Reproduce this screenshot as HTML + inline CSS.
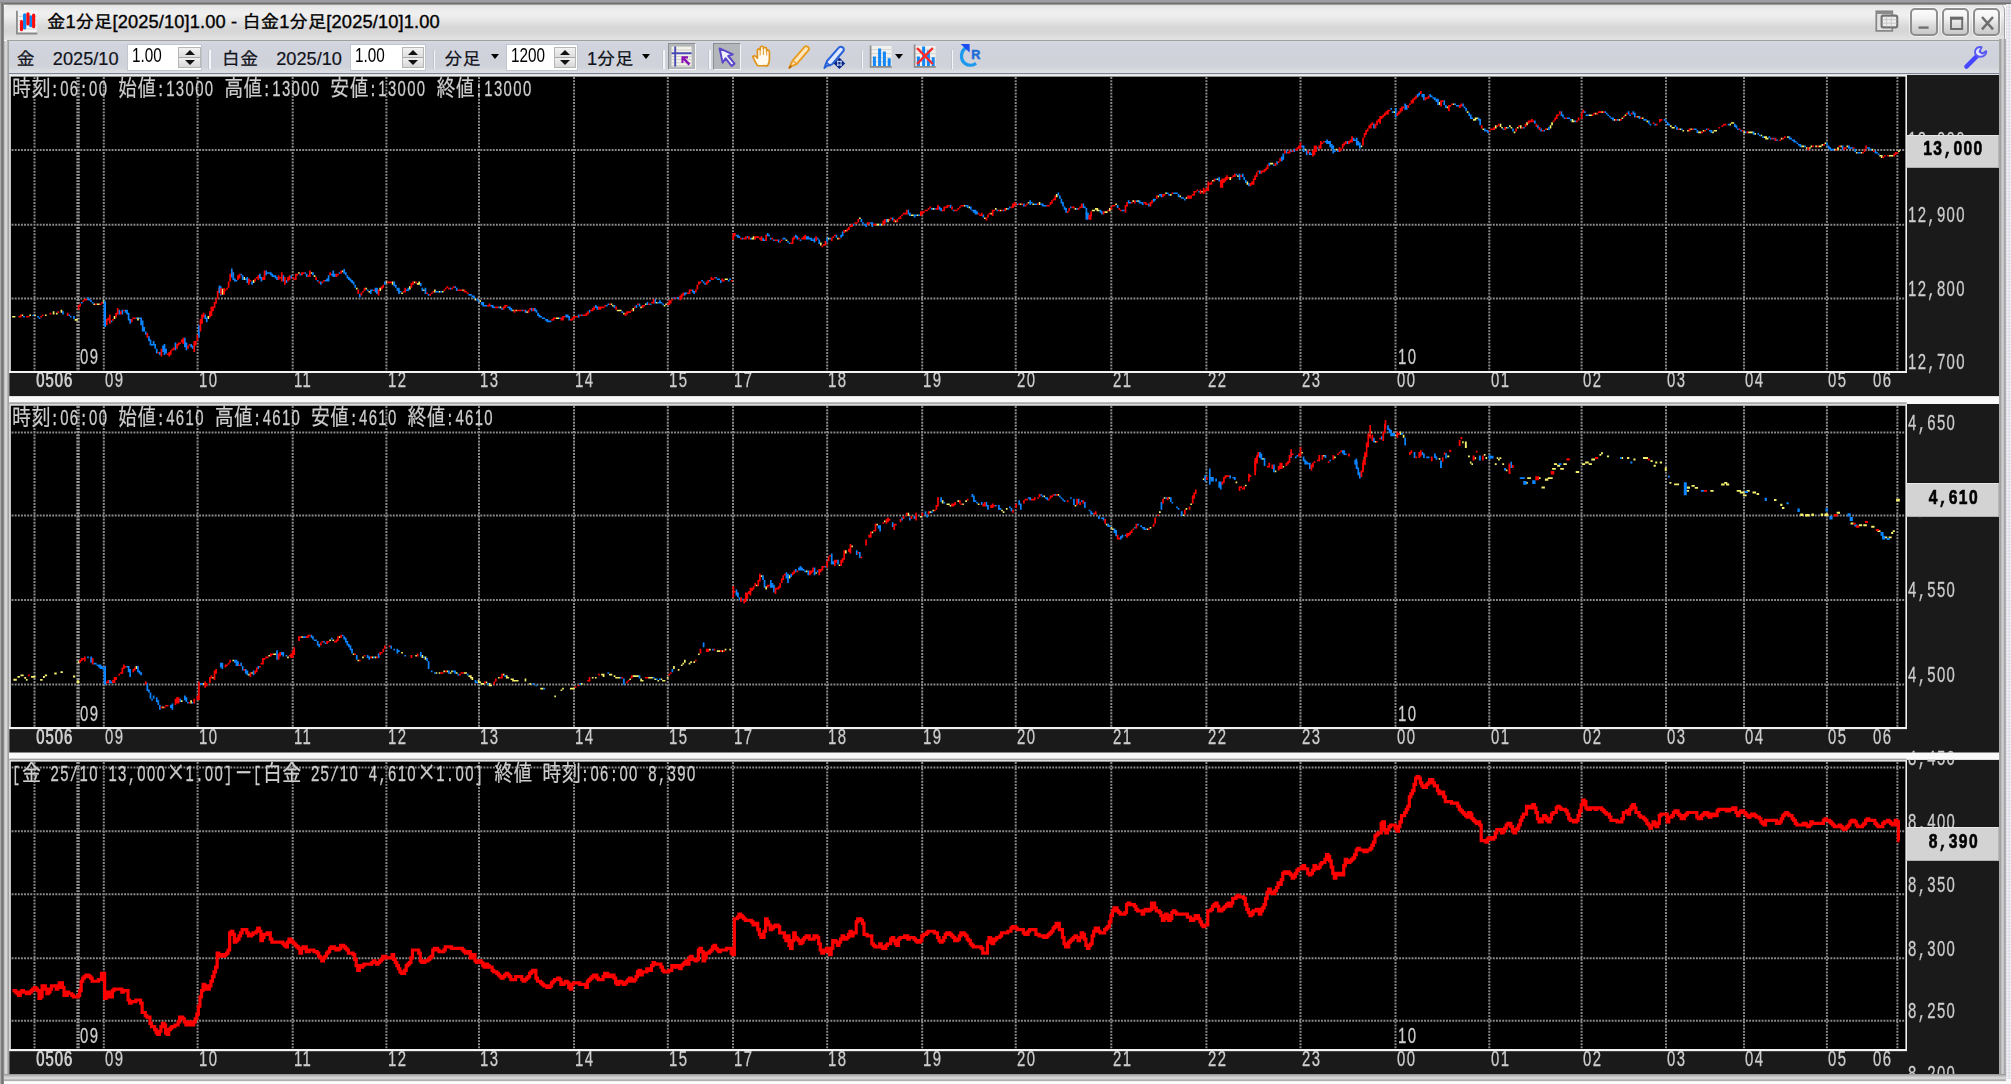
<!DOCTYPE html>
<html lang="ja"><head><meta charset="utf-8"><title>金1分足[2025/10]1.00 - 白金1分足[2025/10]1.00</title>
<style>
html,body{margin:0;padding:0;background:#fff;}
body{width:2011px;height:1084px;overflow:hidden;position:relative;font-family:"Liberation Sans","IPAGothic","Noto Sans CJK JP",sans-serif;}
#win{position:absolute;left:0;top:0;width:2011px;height:1084px;overflow:hidden;background:#f9f9f9;}
#chartsvg{position:absolute;left:0;top:0;}
.ct{position:absolute;white-space:pre;font-family:"Liberation Mono","IPAGothic",monospace;font-size:16.07px;line-height:16px;height:16px;color:#cdcdcd;letter-spacing:1.57px;transform-origin:0 0;transform:scale(0.86,1.25);filter:grayscale(1);-webkit-text-stroke:0.22px #cdcdcd;}
.ct .d{font-family:"Liberation Sans","IPAGothic",sans-serif;font-size:17.335px;}
.ct .jx{font-family:"IPAGothic","Liberation Mono",monospace !important;}
.ct .j{display:inline-block;font-family:"Liberation Mono","IPAGothic",monospace;font-size:22.42px;letter-spacing:0;line-height:10.96px;transform-origin:0 14px;transform:scale(1,0.835);}
.yax{position:absolute;overflow:hidden;}
.bl{position:absolute;height:2.2px;background:#f2f2f2;}
.pbox{position:absolute;background:#d3d3d3;box-sizing:border-box;border-top:1.5px solid #e6e6e6;border-left:1.5px solid #e6e6e6;border-bottom:1.5px solid #b0b0b0;border-right:1px solid #b8b8b8;text-align:center;}
.pbox .ct{position:static;display:inline-block;font-weight:bold;color:#000;transform-origin:50% 0;transform:scale(0.9,1.12);margin-top:3.6px;margin-left:1.6px;letter-spacing:1.5px;-webkit-text-stroke:0.55px #000;}

#frame-top{position:absolute;left:0;top:0;width:2011px;height:5px;background:linear-gradient(#999aa3 0,#a0a0a4 2px,#8a8a8a 2.4px,#707070 3.4px,#7a7a7a 4.2px,#d0d0d0 5px);}
#frame-l{position:absolute;left:0;top:3px;width:3.8px;height:1081px;background:linear-gradient(90deg,#adadad 0,#a8a8a8 1px,#777 1.6px,#727272 3px,#9a9a9a 3.8px);}
#frame-l2{position:absolute;left:3.8px;top:41px;width:5.6px;height:1040px;background:linear-gradient(90deg,#b4b4b4 0,#d9d9d9 1.6px,#d6d6d6 2.8px,#a4a4a4 3.9px,#a0a0a0 5.6px);}
#frame-r{position:absolute;left:1999.2px;top:39px;width:6.8px;height:1042px;background:linear-gradient(90deg,#b0b0b0 0,#9e9e9e 1.2px,#a6a6a6 1.9px,#cbcbcb 2.9px,#cfcfcf 4.2px,#a9a9ab 5.2px,#a4a4a8 6.2px,#b4b4bc 6.8px);}
#frame-rr{position:absolute;left:2006px;top:4px;width:5px;height:1075px;background-color:#dadae2;background-image:radial-gradient(circle at 50% 50%,#f0f0f6 0.9px,rgba(240,240,246,0) 1.7px);background-size:3.125px 3.125px;}
#frame-b{position:absolute;left:3.6px;top:1074.2px;width:2002.2px;height:9.8px;background:linear-gradient(#8f8f8f 0,#b4b4b4 1.5px,#d4d4d4 3.5px,#d6d6d6 4.8px,#a8a8a8 6px,#b0b0b0 6.6px,#fafafa 7.6px,#fff 9.8px);}
#titlebar{position:absolute;left:3.6px;top:4.4px;width:2000.6px;height:35.4px;border-right:1.7px solid #a4a4a8;border-radius:6px 6px 0 0;background:linear-gradient(#dedede 0,#ececec 5px,#f0f0f0 11px,#e4e4e4 17px,#d8d8d8 23px,#d6d6d6 28px,#dedede 33px,#e2e2e2 35.4px);box-shadow:inset 0 1px 0 #f0f0f4;}
#title{position:absolute;left:43.4px;top:6.5px;font-size:18.3px;line-height:22px;color:#000;white-space:pre;letter-spacing:0.12px;-webkit-text-stroke:0.35px #000;}
.wbtn{position:absolute;top:4.0px;width:27.4px;height:28px;box-sizing:border-box;border:2px solid #8e8e8e;border-radius:5px;background:linear-gradient(#fbfbfb 0,#f2f2f2 35%,#dadada 65%,#c9c9c9 100%);box-shadow:0 0 0 1px rgba(255,255,255,.6);}
#toolbar{position:absolute;left:7.4px;top:39.6px;width:1993.8px;height:34.4px;box-sizing:border-box;border:1.7px solid #a0a0a0;border-bottom:1.9px solid #7b8599;background:linear-gradient(#d6d9e1 0,#d1d4dc 4px,#cfd2da 20px,#d0d3d9 26px,#dcdee2 30.8px);}
#toolbar .t{position:absolute;top:7.6px;font-size:18.2px;line-height:22px;color:#10121a;white-space:pre;-webkit-text-stroke:0.2px #10121a;}
.spin{position:absolute;top:3.4px;height:26.6px;box-sizing:border-box;background:#fff;border:1px solid #c2c6ce;}
.spin .v{position:absolute;left:3.6px;top:0.4px;font-size:18.2px;line-height:22px;color:#000;transform-origin:0 50%;transform:scale(0.84,1.08);}
.spin .ud{position:absolute;right:0.6px;top:2.2px;width:22.4px;height:21.2px;background:linear-gradient(#f2f2f2 0,#dedede 46%,#a8a8a8 50%,#efefef 54%,#d8d8d8 100%);box-sizing:border-box;border:1px solid #b6b6b6;}
.spin .ud:before{content:"";position:absolute;left:5.2px;top:2.2px;border-left:5px solid transparent;border-right:5px solid transparent;border-bottom:5.6px solid #111;}
.spin .ud:after{content:"";position:absolute;left:5.2px;top:12.2px;border-left:5px solid transparent;border-right:5px solid transparent;border-top:5.6px solid #111;}
.sep{position:absolute;top:9px;width:1.7px;height:19.6px;background:#f4f5f8;box-shadow:-1px 0 0 #c2c5cc;}
.dd{position:absolute;top:13.6px;border-left:4.7px solid transparent;border-right:4.7px solid transparent;border-top:5px solid #000;}
.tbtn{position:absolute;top:2.2px;width:27.6px;height:27.4px;box-sizing:border-box;background:#b4b7ba;border:1.6px solid #8c8e92;border-right-color:#f4f4f6;border-bottom-color:#f4f4f6;}
.ico{position:absolute;}
#gap1,#gap2{position:absolute;left:9.4px;width:1990px;background:#f9f9f9;}
.gl{position:absolute;left:9.0px;width:1897.6px;height:1.8px;background:#a0a0a0;z-index:3;}

</style></head><body>
<div id="win">
<div id="titlebar">
<svg class="ico" style="left:11.6px;top:5.6px" width="24.2" height="25.4" viewBox="0 0 22 24"><rect x="1" y="1" width="19" height="21" fill="#f4f4f4"/><path d="M1.4 0.8V22.2H20.6" stroke="#8a8a8a" stroke-width="1.7" fill="none"/><path d="M3 6H20M3 10H20M3 14H20M3 18H20" stroke="#d4d4d4" stroke-width="1"/><path d="M8.7 4.6V17M14.5 6.4V14.8" stroke="#0a84ee" stroke-width="3.1" stroke-linecap="round"/><path d="M5.7 11V18.6M11.8 3.6V13.2M17.2 4.8V15.8" stroke="#ff0a0a" stroke-width="3" stroke-linecap="round"/></svg>
<div id="title">金1分足[2025/10]1.00 - 白金1分足[2025/10]1.00</div>
<svg class="ico" style="left:1871.6px;top:6px" width="24" height="24" viewBox="0 0 24 24"><rect x="1.3" y="1.3" width="16" height="19.6" fill="#e2e2e2" stroke="#858585" stroke-width="1.7"/><path d="M1.3 3H17.3" stroke="#8c8c8c" stroke-width="2"/><rect x="6.6" y="5.6" width="15.6" height="11.8" rx="1.6" fill="#ededed" stroke="#727272" stroke-width="2.1"/><path d="M7.6 9.6H21.6M7.6 13.2H21.6M11.6 6.4V16.8M16.4 6.4V16.8" stroke="#c4c4c4" stroke-width="0.9"/></svg>
<div class="wbtn" style="left:1906.8px"><svg class="ico" style="left:0;top:0" width="24" height="24" viewBox="0 0 24 24"><path d="M6.6 17.6H16.6" stroke="#6e6e6e" stroke-width="2.3"/></svg></div>
<div class="wbtn" style="left:1938.0px"><svg class="ico" style="left:0;top:0" width="24" height="24" viewBox="0 0 24 24"><path d="M7 8V19H18.2V8" stroke="#6e6e6e" stroke-width="1.9" fill="none"/><path d="M6 8.2H19.2" stroke="#6a6a6a" stroke-width="3.1"/></svg></div>
<div class="wbtn" style="left:1969.4px"><svg class="ico" style="left:0;top:0" width="24" height="24" viewBox="0 0 24 24"><path d="M7 7L18 19.4M18 7L7 19.4" stroke="#6e6e6e" stroke-width="2.5" fill="none"/></svg></div>
</div>
<div id="toolbar">
<div class="t" style="left:8.2px">金</div>
<div class="t" style="left:44.4px">2025/10</div>
<div class="spin" style="left:118.6px;width:75.4px"><span class="v">1.00</span><span class="ud"></span></div>
<div class="sep" style="left:200.8px"></div>
<div class="t" style="left:213.4px">白金</div>
<div class="t" style="left:267.8px">2025/10</div>
<div class="spin" style="left:342px;width:75.4px"><span class="v">1.00</span><span class="ud"></span></div>
<div class="sep" style="left:425.2px"></div>
<div class="t" style="left:435.8px">分足</div>
<div class="dd" style="left:482.4px"></div>
<div class="spin" style="left:498px;width:71.2px"><span class="v">1200</span><span class="ud"></span></div>
<div class="t" style="left:578.6px">1分足</div>
<div class="dd" style="left:634px"></div>
<div class="sep" style="left:655px"></div>
<div class="tbtn" style="left:659.6px"><svg class="ico" style="left:1.4px;top:1.2px" width="23" height="23" viewBox="0 0 23 23"><rect x="1.6" y="1.6" width="20" height="20" fill="#f3f3ea"/><path d="M2 5H21.6M2 11.6H21.6M2 14.6H21.6M2 17.8H21.6M2 20.6H21.6" stroke="#cfcfc8" stroke-width="1"/><path d="M5.2 1.4V21.6M1.6 8.2H21.6" stroke="#4a4ab4" stroke-width="1.9"/><path d="M11.4 11.2H18V13.4H15.2L20.4 18.6L18.6 20.4L13.4 15.2V18H11.4Z" fill="#8a14b4"/></svg></div>
<div class="sep" style="left:700.6px"></div>
<div class="tbtn" style="left:705px"><svg class="ico" style="left:1.2px;top:1.2px" width="24" height="24" viewBox="0 0 24 24"><path d="M3.6 3.4L16.8 9.4L12.2 11L18.6 18.6L15.6 21L9.6 13.4L6.6 17.6Z" fill="#f2f2fb" stroke="#5a46c8" stroke-width="2" stroke-linejoin="round"/></svg></div>
<svg class="ico" style="left:742.6px;top:3.2px" width="24" height="25" viewBox="0 0 24 25"><path d="M6.6 21.6C4 17.6 2.8 15 1.8 12.6C3 11.2 5 12 6.4 14.2V6.2C6.6 4.4 9 4.4 9.2 6.2V3.6C9.6 1.8 12 1.8 12.4 3.6V4.6C12.8 2.8 15.2 3 15.6 4.8V7C16 5.6 18.2 5.8 18.4 7.6V15.4C18.4 18.2 17.6 20 16.6 21.8Z" fill="#fffaf0" stroke="#e0941c" stroke-width="1.7" stroke-linejoin="round"/><path d="M9.2 6.4V11.4M12.4 5V11M15.6 7V11.6" stroke="#e8a640" stroke-width="1.2"/></svg>
<svg class="ico" style="left:778.6px;top:3.2px" width="25" height="25" viewBox="0 0 25 25"><path d="M5.6 16.6L17.8 2.6C19.6 1.2 23 3.6 21.6 6.2L9.6 20.2L4.6 22.2L2.2 24L3.4 21.2Z" fill="#fde7c0" stroke="#e89c20" stroke-width="1.9" stroke-linejoin="round"/><path d="M6.6 17.2L9.2 19.6" stroke="#e89c20" stroke-width="1.4"/><path d="M2 24.2L4.4 21.8" stroke="#a86410" stroke-width="1.6"/></svg>
<svg class="ico" style="left:813.8px;top:3.2px" width="26" height="25" viewBox="0 0 26 25"><path d="M5 17L17 3.4C19.2 1.6 23 4 21.4 7L10 20.4L5.2 21.8L2.4 24L3.6 20.6Z" fill="#dfe9ff" stroke="#2a62d8" stroke-width="2" stroke-linejoin="round"/><path d="M4.2 18.4L8.6 22" stroke="#2a62d8" stroke-width="1.8"/><path d="M17.4 13.6L23.2 19.4L17.4 25L11.6 19.4Z" fill="#0a2a8a"/><path d="M15 17.4H19.8M15 21H19.8M15.8 16.6V22M19 16.6V22" stroke="#dfe6ff" stroke-width="0.9"/></svg>
<div class="sep" style="left:853.2px"></div>
<svg class="ico" style="left:860.6px;top:4.4px" width="24" height="24" viewBox="0 0 24 24"><rect x="1.6" y="1" width="21" height="20.6" fill="#f1f1ef"/><path d="M2 4.6H22.6M2 8.6H22.6M2 12.6H22.6M2 16.6H22.6" stroke="#d6d6d2" stroke-width="1"/><path d="M1.6 0.6V21.8H22.8" stroke="#8c8c8c" stroke-width="1.7" fill="none"/><path d="M5.4 11.6V21M10.6 3.4V21M15.4 6.6V21M20.2 13.2V21" stroke="#1288f8" stroke-width="3"/></svg>
<div class="dd" style="left:886.8px"></div>
<svg class="ico" style="left:904.6px;top:3.4px" width="24" height="25" viewBox="0 0 24 25"><rect x="1.6" y="2" width="21" height="20.6" fill="#f1f1ef"/><path d="M2 5.6H22.6M2 9.6H22.6M2 13.6H22.6M2 17.6H22.6" stroke="#d6d6d2" stroke-width="1"/><path d="M1.6 0.6V22.8H22.8" stroke="#8c8c8c" stroke-width="1.7" fill="none"/><path d="M5.4 12.6V22M10.6 2.4V22M15.4 6.6V22M20.2 13.2V22" stroke="#1288f8" stroke-width="3"/><path d="M4.6 4.6L19.2 19.4M19.2 4.6L4.6 19.4" stroke="#ff2a2a" stroke-width="2.3" stroke-linecap="round"/></svg>
<div class="sep" style="left:943.4px"></div>
<svg class="ico" style="left:949.4px;top:1.8px" width="26" height="27" viewBox="0 0 26 27"><path d="M8.6 5.2C2.6 8.6 1.6 17.6 7.2 21.6C10.6 24 15 23.6 18 21.2" stroke="#1c9af0" stroke-width="3.3" fill="none"/><path d="M2.6 2H11.6V10.4Z" fill="#1a4cf0"/><text x="13.2" y="17.4" font-family="'Liberation Sans',sans-serif" font-weight="bold" font-size="12.6" fill="#1c6cd8" stroke="#1c6cd8" stroke-width="0.5">R</text></svg>
<svg class="ico" style="left:1954.4px;top:3.4px" width="26" height="26" viewBox="0 0 26 26"><path d="M3.4 22.6L14.4 11.6" stroke="#4646ff" stroke-width="4.4" stroke-linecap="round"/><path d="M16.4 3C12.6 3.6 11 7.6 12.6 10.4C14.6 13.6 19.6 13.6 22.2 10.6C23 9.6 23.4 8.4 23.2 7.2L19.4 9.6L16.6 7.6L18.6 3.2C17.8 3 17 2.9 16.4 3Z" fill="#e8e8ff" stroke="#5a5af0" stroke-width="2" stroke-linejoin="round"/></svg>
</div>
<div id="gap1" style="top:396.1px;height:6.2px"></div>
<div id="gap2" style="top:752.5px;height:6.2px"></div>

<svg id="chartsvg" width="2011" height="1084" viewBox="0 0 2011 1084">
<rect x="9.3" y="74.89999999999999" width="1989.9" height="321.2" fill="#1a1a1a"/>
<rect x="10.0" y="75.8" width="1896.2" height="296.1" fill="#000" stroke="#f0f0f0" stroke-width="1.6"/>
<rect x="9.3" y="404.0" width="1989.9" height="348.5" fill="#1a1a1a"/>
<rect x="10.0" y="404.9" width="1896.2" height="323.40000000000003" fill="#000" stroke="#f0f0f0" stroke-width="1.6"/>
<rect x="9.3" y="759.9" width="1989.9" height="314.3" fill="#1a1a1a"/>
<rect x="10.0" y="760.8000000000001" width="1896.2" height="289.5999999999999" fill="#000" stroke="#f0f0f0" stroke-width="1.6"/>
<rect x="9.2" y="402.3" width="1897.4" height="1.6" fill="#a0a0a0"/>
<rect x="9.2" y="758.6" width="1897.4" height="1.6" fill="#a0a0a0"/>
<path d="M11.600000000000001 150.0H1905.4M11.600000000000001 224.7H1905.4M11.600000000000001 298.4H1905.4M34.5 77.0V371.1M103.8 77.0V371.1M197.6 77.0V371.1M292.7 77.0V371.1M386.4 77.0V371.1M479.0 77.0V371.1M574.0 77.0V371.1M667.8 77.0V371.1M733.0 77.0V371.1M827.2 77.0V371.1M922.2 77.0V371.1M1015.7 77.0V371.1M1111.3 77.0V371.1M1206.4 77.0V371.1M1300.5 77.0V371.1M1395.5 77.0V371.1M1489.3 77.0V371.1M1581.6 77.0V371.1M1666.0 77.0V371.1M1744.0 77.0V371.1M1826.9 77.0V371.1M1897.4 77.0V371.1M11.600000000000001 432.6H1905.4M11.600000000000001 515.6H1905.4M11.600000000000001 600.1H1905.4M11.600000000000001 684.5H1905.4M34.5 406.09999999999997V727.5M103.8 406.09999999999997V727.5M197.6 406.09999999999997V727.5M292.7 406.09999999999997V727.5M386.4 406.09999999999997V727.5M479.0 406.09999999999997V727.5M574.0 406.09999999999997V727.5M667.8 406.09999999999997V727.5M733.0 406.09999999999997V727.5M827.2 406.09999999999997V727.5M922.2 406.09999999999997V727.5M1015.7 406.09999999999997V727.5M1111.3 406.09999999999997V727.5M1206.4 406.09999999999997V727.5M1300.5 406.09999999999997V727.5M1395.5 406.09999999999997V727.5M1489.3 406.09999999999997V727.5M1581.6 406.09999999999997V727.5M1666.0 406.09999999999997V727.5M1744.0 406.09999999999997V727.5M1826.9 406.09999999999997V727.5M1897.4 406.09999999999997V727.5M11.600000000000001 767.4H1905.4M11.600000000000001 831.3H1905.4M11.600000000000001 894.3H1905.4M11.600000000000001 958.3H1905.4M11.600000000000001 1020.8H1905.4M34.5 762.0V1049.6M103.8 762.0V1049.6M197.6 762.0V1049.6M292.7 762.0V1049.6M386.4 762.0V1049.6M479.0 762.0V1049.6M574.0 762.0V1049.6M667.8 762.0V1049.6M733.0 762.0V1049.6M827.2 762.0V1049.6M922.2 762.0V1049.6M1015.7 762.0V1049.6M1111.3 762.0V1049.6M1206.4 762.0V1049.6M1300.5 762.0V1049.6M1395.5 762.0V1049.6M1489.3 762.0V1049.6M1581.6 762.0V1049.6M1666.0 762.0V1049.6M1744.0 762.0V1049.6M1826.9 762.0V1049.6M1897.4 762.0V1049.6" stroke="#8a8a8a" stroke-width="2.0" stroke-dasharray="1.9 1.225" fill="none"/>
<path d="M78.05 77.0V371.1M78.05 406.09999999999997V727.5M78.05 762.0V1049.6" stroke="#989898" stroke-width="3.4" stroke-dasharray="1.9 1.225" fill="none"/>
<path d="M12.98 315.9V317.6M14.54 315.9V317.6M22.36 314.4V316.0M30.17 314.4V316.0M34.86 314.4V316.0M45.79 314.4V316.0M53.61 311.2V314.4M56.73 312.8V314.4M61.42 309.7V312.8M75.48 319.1V320.7M77.04 319.1V320.7M94.23 303.4V305.1M97.36 303.4V305.1M98.92 303.4V305.1M103.61 300.3V303.4M114.54 315.9V319.1M137.98 317.5V320.6M208.29 315.9V319.1M244.23 276.9V280.0M253.61 280.0V283.1M298.92 272.2V273.8M311.42 272.2V273.8M314.54 275.3V276.9M342.67 270.6V272.3M356.73 287.8V289.4M366.11 287.8V289.4M369.23 290.9V292.6M380.17 287.8V290.9M386.42 281.6V283.2M392.67 281.6V284.7M402.04 292.5V294.1M409.86 286.2V289.4M414.54 281.6V283.2M417.67 283.1V284.8M419.23 281.6V284.7M423.92 289.4V291.0M434.86 289.4V292.5M439.54 290.9V292.6M442.67 290.9V292.6M462.98 289.4V291.0M475.48 298.7V300.4M480.17 300.3V301.9M500.48 306.6V308.2M512.98 309.7V311.3M516.11 309.7V311.3M527.04 311.2V312.9M556.73 317.5V319.1M558.29 317.5V319.1M611.42 303.4V305.1M612.98 305.0V306.6M617.67 309.7V311.3M619.23 309.7V311.3M620.79 309.7V311.3M623.92 312.8V314.4M633.29 308.1V311.2M641.11 306.6V308.2M645.79 303.4V305.1M656.73 301.9V303.5M664.54 305.0V306.6M666.11 303.4V305.1M725.48 278.4V280.1M727.04 278.4V280.1M752.04 237.8V239.4M753.61 236.2V239.4M786.42 239.4V241.0M820.79 242.5V245.6M828.61 237.8V239.4M837.98 237.8V239.4M845.79 230.0V231.6M859.86 217.5V219.1M877.04 223.7V225.4M878.61 223.7V225.4M881.73 223.7V225.4M887.98 219.1V222.2M895.79 220.6V222.3M911.42 214.4V216.0M912.98 214.4V216.0M917.67 214.4V216.0M933.29 208.1V209.8M964.54 205.0V206.6M969.23 206.6V208.2M984.86 217.5V219.1M991.11 212.8V214.4M995.79 208.1V209.8M1000.48 209.7V211.3M1006.73 208.1V209.8M1020.79 203.4V205.1M1028.61 201.9V203.5M1033.29 203.4V205.1M1039.54 201.9V205.0M1056.73 194.1V197.2M1075.48 208.1V209.8M1092.67 209.7V211.3M1094.23 209.7V211.3M1095.79 208.1V209.8M1097.36 208.1V211.2M1098.92 209.7V211.3M1105.17 211.2V212.9M1106.73 211.2V212.9M1109.86 208.1V211.2M1116.11 203.4V205.1M1133.29 200.3V201.9M1137.98 200.3V201.9M1158.29 195.6V197.3M1166.11 192.5V194.1M1170.79 194.1V195.7M1180.17 195.6V197.3M1186.42 197.2V198.8M1202.04 190.9V192.6M1212.98 180.0V181.6M1217.67 178.4V180.1M1230.17 176.9V180.0M1237.98 175.3V176.9M1247.36 181.6V184.7M1270.79 162.8V164.4M1272.36 162.8V164.4M1305.17 148.7V150.4M1336.42 148.7V150.4M1361.42 145.6V147.3M1394.23 111.2V112.9M1439.54 101.9V105.0M1447.36 106.5V108.2M1453.61 103.4V105.1M1467.67 111.2V112.9M1473.92 119.0V120.7M1475.48 117.5V120.6M1477.04 117.5V119.1M1483.29 128.4V130.1M1495.79 125.3V128.4M1500.48 123.7V126.9M1502.04 126.9V128.5M1506.73 126.9V128.5M1509.86 125.3V126.9M1511.42 126.9V128.5M1514.54 131.6V133.2M1517.67 126.9V128.5M1520.79 125.3V128.4M1527.04 122.2V125.3M1547.36 128.4V130.1M1550.48 125.3V128.4M1552.04 122.2V125.3M1572.36 119.0V122.2M1573.92 120.6V122.3M1589.54 114.4V116.0M1591.11 114.4V116.0M1595.79 112.8V114.4M1602.04 111.2V112.9M1614.54 119.0V120.7M1619.23 119.0V120.7M1622.36 117.5V119.1M1625.48 114.4V116.0M1637.98 115.9V117.6M1642.67 117.5V119.1M1647.36 120.6V122.3M1670.79 125.3V126.9M1672.36 126.9V128.5M1673.92 126.9V128.5M1680.17 128.4V130.1M1683.29 130.0V131.6M1687.98 130.0V131.6M1691.11 128.4V130.1M1698.92 131.6V133.2M1700.48 131.6V133.2M1703.61 130.0V131.6M1712.98 131.6V133.2M1714.54 130.0V131.6M1716.11 130.0V131.6M1730.17 123.7V125.4M1731.73 122.2V123.8M1733.29 122.2V123.8M1744.23 131.6V133.2M1748.92 131.6V133.2M1750.48 131.6V133.2M1752.04 131.6V133.2M1755.17 133.1V134.8M1761.42 134.7V136.3M1764.54 136.2V137.9M1766.11 136.2V139.4M1767.67 137.8V139.4M1781.73 137.8V139.4M1787.98 136.2V137.9M1802.04 145.6V147.3M1803.61 145.6V147.3M1806.73 147.2V148.8M1809.86 147.2V148.8M1811.42 145.6V147.3M1816.11 145.6V147.3M1819.23 145.6V147.3M1820.79 145.6V147.3M1822.36 144.1V145.7M1825.48 142.5V144.1M1834.86 148.7V150.4M1837.98 147.2V150.3M1841.11 145.6V147.3M1847.36 145.6V147.3M1856.73 151.9V153.5M1861.42 151.9V153.5M1872.36 148.7V150.4M1880.17 155.0V156.6M1881.73 155.0V158.1M1889.54 155.0V156.6M1891.11 155.0V156.6M1892.67 155.0V156.6M1898.92 150.3V151.9" stroke="#f3ef6c" stroke-width="1.7" fill="none"/>
<path d="M23.92 315.9V317.6M33.29 314.4V316.0M37.98 315.9V317.6M39.54 317.5V319.1M62.98 311.2V314.4M69.23 314.4V316.0M70.79 315.9V317.6M73.92 315.9V319.1M81.73 301.9V303.5M87.98 297.2V300.3M89.54 298.7V300.4M91.11 300.3V301.9M92.67 301.9V303.5M105.17 301.9V326.9M111.42 320.6V322.3M119.23 309.7V314.4M122.36 309.7V314.4M125.48 309.7V312.8M127.04 309.7V314.4M128.61 312.8V320.6M130.17 319.1V323.7M136.42 317.5V319.1M139.54 317.5V319.1M141.11 317.5V325.3M142.67 320.6V331.6M144.23 326.9V331.6M145.79 331.6V334.7M148.92 336.2V340.9M150.48 339.4V345.6M152.04 344.1V345.7M153.61 340.9V345.6M155.17 344.1V348.7M156.73 348.7V353.4M159.86 351.9V355.0M162.98 345.6V351.9M164.54 344.1V355.0M166.11 348.7V353.4M175.48 342.5V350.3M184.86 337.8V347.2M186.42 342.5V350.3M191.11 344.1V347.2M192.67 345.6V348.7M198.92 325.3V337.8M205.17 314.4V319.1M206.73 317.5V322.2M220.79 286.2V295.6M222.36 289.4V294.1M233.29 272.2V280.0M234.86 278.4V281.6M236.42 280.0V281.6M241.11 273.7V275.4M242.67 275.3V280.0M245.79 278.4V280.1M247.36 276.9V283.1M252.04 281.6V284.7M259.86 273.7V278.4M261.42 276.9V281.6M266.11 270.6V275.3M267.67 272.2V273.8M269.23 272.2V273.8M270.79 272.2V275.3M272.36 273.7V276.9M273.92 275.3V276.9M275.48 275.3V278.4M277.04 276.9V280.0M283.29 275.3V281.6M286.42 280.0V283.1M291.11 275.3V278.4M300.48 273.7V275.4M305.17 272.2V273.8M306.73 273.7V276.9M312.98 272.2V275.3M317.67 280.0V281.6M320.79 281.6V284.7M325.48 280.0V281.6M327.04 278.4V281.6M328.61 275.3V281.6M331.73 273.7V275.4M333.29 270.6V276.9M334.86 273.7V276.9M339.54 272.2V273.8M344.23 269.1V273.7M345.79 272.2V275.3M347.36 275.3V278.4M348.92 276.9V280.0M350.48 278.4V281.6M352.04 280.0V283.1M353.61 281.6V284.7M355.17 284.7V287.8M359.86 294.1V297.2M367.67 289.4V291.0M370.79 289.4V294.1M372.36 289.4V291.0M375.48 287.8V292.5M377.04 287.8V294.1M384.86 281.6V284.7M394.23 281.6V286.2M395.79 284.7V287.8M397.36 287.8V290.9M398.92 287.8V294.1M400.48 290.9V292.6M406.73 289.4V291.0M408.29 287.8V290.9M420.79 283.1V286.2M422.36 287.8V290.9M425.48 287.8V294.1M428.61 294.1V295.7M436.42 290.9V292.6M437.98 290.9V292.6M441.11 290.9V292.6M450.48 287.8V289.4M455.17 286.2V287.9M456.73 287.8V290.9M469.23 294.1V295.7M470.79 294.1V295.7M472.36 295.6V297.3M473.92 295.6V298.7M477.04 298.7V300.4M478.61 300.3V301.9M481.73 301.9V305.0M483.29 301.9V306.6M484.86 305.0V306.6M486.42 305.0V306.6M491.11 305.0V306.6M492.67 305.0V308.1M494.23 306.6V308.2M498.92 306.6V308.2M502.04 308.1V309.8M508.29 306.6V308.2M509.86 306.6V309.7M511.42 308.1V311.2M522.36 309.7V311.3M525.48 309.7V312.8M531.73 308.1V311.2M534.86 308.1V311.2M536.42 309.7V312.8M537.98 312.8V315.9M539.54 314.4V317.5M541.11 315.9V317.6M542.67 317.5V319.1M544.23 317.5V319.1M545.79 319.1V320.7M547.36 319.1V322.2M548.92 320.6V322.3M550.48 320.6V322.3M559.86 317.5V319.1M566.11 314.4V317.5M567.67 314.4V317.5M569.23 315.9V320.6M578.61 314.4V317.5M581.73 314.4V316.0M589.54 309.7V312.8M595.79 305.0V308.1M597.36 306.6V309.7M606.73 305.0V306.6M608.29 303.4V305.1M614.54 305.0V308.1M622.36 311.2V312.9M636.42 305.0V308.1M639.54 303.4V306.6M647.36 301.9V305.0M650.48 303.4V305.1M655.17 298.7V303.4M658.29 301.9V303.5M659.86 300.3V303.4M661.42 301.9V303.5M662.98 303.4V305.1M673.92 297.2V298.8M677.04 297.2V298.8M678.61 297.2V298.8M684.86 292.5V295.6M686.42 292.5V294.1M692.67 289.4V292.5M694.23 290.9V294.1M702.04 280.0V281.6M703.61 281.6V283.2M705.17 283.1V284.8M709.86 280.0V281.6M716.11 276.9V278.5M717.67 278.4V280.1M719.23 278.4V280.1M720.79 280.0V283.1M728.61 280.0V281.6M730.17 278.4V280.1M736.42 234.7V236.3M737.98 234.7V237.8M739.54 236.2V237.9M742.67 237.8V239.4M747.36 236.2V237.9M750.48 237.8V239.4M762.98 237.8V240.9M764.54 239.4V241.0M767.67 233.1V236.2M769.23 234.7V236.3M770.79 237.8V239.4M773.92 239.4V241.0M778.61 239.4V242.5M783.29 237.8V239.4M784.86 237.8V239.4M787.98 240.9V242.6M789.54 242.5V244.1M795.79 234.7V237.8M797.36 236.2V239.4M800.48 239.4V241.0M806.73 236.2V239.4M808.29 236.2V239.4M809.86 237.8V239.4M811.42 237.8V240.9M812.98 239.4V241.0M814.54 237.8V242.5M817.67 237.8V239.4M819.23 239.4V244.1M827.04 237.8V242.5M830.17 237.8V239.4M836.42 234.7V237.8M841.11 234.7V237.8M842.67 231.6V236.2M853.61 223.7V225.4M861.42 219.1V222.2M862.98 222.2V223.8M864.54 223.7V225.4M866.11 223.7V226.9M870.79 222.2V223.8M872.36 222.2V226.9M880.17 223.7V225.4M886.42 219.1V222.2M892.67 217.5V220.6M908.29 209.7V214.4M909.86 212.8V215.9M914.54 214.4V217.5M916.11 214.4V216.0M919.23 214.4V216.0M931.73 208.1V209.8M934.86 208.1V209.8M939.54 206.6V209.7M941.11 208.1V211.2M950.48 205.0V208.1M953.61 209.7V211.3M966.11 205.0V206.6M967.67 205.0V208.1M970.79 206.6V209.7M972.36 209.7V211.3M973.92 209.7V212.8M975.48 209.7V214.4M977.04 211.2V214.4M983.29 214.4V217.5M997.36 209.7V211.3M1003.61 209.7V211.3M1008.29 208.1V209.8M1009.86 206.6V208.2M1017.67 203.4V205.1M1023.92 203.4V206.6M1030.17 200.3V205.0M1031.73 201.9V203.5M1034.86 203.4V205.1M1036.42 203.4V205.1M1041.11 203.4V205.1M1042.67 203.4V206.6M1044.23 205.0V206.6M1045.79 205.0V206.6M1058.29 192.5V195.6M1059.86 195.6V198.7M1061.42 198.7V203.4M1062.98 201.9V206.6M1064.54 206.6V209.7M1066.11 208.1V212.8M1070.79 206.6V208.2M1077.04 208.1V209.8M1083.29 203.4V208.1M1084.86 206.6V208.2M1086.42 208.1V214.4M1087.98 212.8V219.1M1100.48 209.7V212.8M1102.04 211.2V214.4M1117.67 205.0V208.1M1122.36 209.7V211.3M1123.92 209.7V211.3M1128.61 200.3V203.4M1130.17 201.9V203.5M1136.42 200.3V201.9M1139.54 200.3V203.4M1141.11 201.9V203.5M1142.67 201.9V205.0M1148.92 203.4V206.6M1153.61 198.7V201.9M1155.17 198.7V200.4M1159.86 194.1V195.7M1161.42 194.1V197.2M1167.67 192.5V194.1M1169.23 194.1V195.7M1173.92 192.5V194.1M1175.48 192.5V194.1M1177.04 192.5V194.1M1178.61 194.1V197.2M1181.73 197.2V198.8M1183.29 197.2V198.8M1184.86 198.7V200.4M1198.92 190.9V192.6M1216.11 178.4V180.1M1219.23 176.9V181.6M1236.42 173.7V175.4M1239.54 173.7V180.0M1242.67 173.7V176.9M1244.23 176.9V180.0M1245.79 180.0V183.1M1248.92 183.1V186.2M1259.86 170.6V173.7M1269.23 162.8V165.9M1273.92 164.4V166.0M1277.04 161.2V164.4M1281.73 156.6V161.2M1283.29 153.4V159.7M1286.42 150.3V153.4M1291.11 150.3V151.9M1294.23 148.7V151.9M1302.04 145.6V147.3M1303.61 145.6V151.9M1306.73 150.3V155.0M1309.86 151.9V155.0M1311.42 153.4V155.1M1317.67 147.2V148.8M1325.48 140.9V142.6M1327.04 139.4V144.1M1328.61 140.9V144.1M1330.17 140.9V147.2M1331.73 144.1V148.7M1333.29 145.6V153.4M1334.86 150.3V151.9M1337.98 150.3V151.9M1347.36 140.9V144.1M1353.61 137.8V140.9M1355.17 139.4V141.0M1356.73 137.8V145.6M1358.29 140.9V145.6M1359.86 142.5V148.7M1373.92 123.7V128.4M1391.11 108.1V109.8M1392.67 111.2V112.9M1395.79 108.1V117.5M1405.17 103.4V109.7M1406.73 105.0V109.7M1417.67 94.0V97.2M1419.23 92.5V95.6M1422.36 94.0V97.2M1423.92 94.0V100.3M1430.17 94.0V97.2M1431.73 95.6V97.3M1433.29 97.2V98.8M1434.86 97.2V100.3M1436.42 98.7V101.9M1437.98 98.7V105.0M1444.23 100.3V105.0M1445.79 105.0V108.1M1455.17 103.4V105.1M1456.73 105.0V106.6M1458.29 105.0V106.6M1462.98 103.4V106.5M1464.54 106.5V108.2M1466.11 108.1V111.2M1469.23 112.8V115.9M1470.79 114.4V119.0M1472.36 117.5V119.1M1478.61 117.5V120.6M1480.17 119.0V125.3M1484.86 128.4V131.6M1486.42 130.0V131.6M1487.98 130.0V133.1M1503.61 128.4V130.1M1508.29 126.9V128.5M1512.98 128.4V131.6M1523.92 126.9V128.5M1534.86 120.6V123.7M1537.98 125.3V128.4M1541.11 128.4V131.6M1544.23 130.0V131.6M1548.92 126.9V130.0M1561.42 111.2V115.9M1562.98 114.4V117.5M1564.54 117.5V119.1M1567.67 117.5V119.1M1569.23 117.5V119.1M1570.79 119.0V120.7M1575.48 120.6V122.3M1584.86 111.2V112.9M1586.42 114.4V116.0M1587.98 114.4V116.0M1605.17 111.2V112.9M1606.73 112.8V114.4M1608.29 114.4V116.0M1609.86 115.9V117.6M1611.42 117.5V119.1M1612.98 117.5V120.6M1617.67 119.0V120.7M1628.61 111.2V114.4M1630.17 114.4V116.0M1633.29 111.2V114.4M1634.86 112.8V117.5M1639.54 115.9V119.0M1644.23 119.0V120.7M1645.79 119.0V120.7M1648.92 120.6V123.7M1650.48 123.7V125.4M1655.17 123.7V125.4M1664.54 119.0V120.7M1666.11 120.6V122.3M1667.67 122.2V125.3M1669.23 123.7V125.4M1675.48 125.3V126.9M1677.04 126.9V130.0M1681.73 128.4V130.1M1694.23 128.4V130.1M1695.79 128.4V130.1M1697.36 130.0V133.1M1706.73 128.4V130.1M1709.86 130.0V131.6M1711.42 130.0V133.1M1728.61 123.7V125.4M1734.86 123.7V126.9M1736.42 125.3V128.4M1737.98 128.4V130.1M1741.11 130.0V131.6M1745.79 131.6V133.2M1753.61 131.6V134.7M1758.29 133.1V134.8M1759.86 134.7V136.3M1762.98 136.2V137.9M1769.23 136.2V137.9M1770.79 137.8V139.4M1773.92 137.8V139.4M1777.04 139.4V141.0M1789.54 136.2V139.4M1791.11 137.8V139.4M1792.67 139.4V141.0M1794.23 139.4V142.5M1795.79 140.9V142.6M1797.36 142.5V144.1M1798.92 144.1V145.7M1800.48 144.1V147.2M1805.17 145.6V147.3M1827.04 142.5V145.6M1828.61 145.6V148.7M1830.17 147.2V150.3M1831.73 148.7V150.4M1833.29 148.7V150.4M1842.67 145.6V150.3M1848.92 145.6V148.7M1850.48 147.2V148.8M1852.04 147.2V148.8M1855.17 148.7V151.9M1858.29 151.9V153.5M1859.86 151.9V153.5M1867.67 147.2V148.8M1869.23 147.2V148.8M1870.79 148.7V150.4M1875.48 150.3V153.4M1877.04 151.9V153.5M1878.61 153.4V155.1" stroke="#0a84ff" stroke-width="1.7" fill="none"/>
<path d="M19.23 315.9V317.6M20.79 314.4V317.5M27.04 315.9V317.6M28.61 315.9V317.6M41.11 315.9V317.6M42.67 314.4V316.0M50.48 312.8V314.4M58.29 311.2V312.9M67.67 312.8V315.9M78.61 305.0V309.7M80.17 303.4V306.6M83.29 300.3V301.9M84.86 298.7V300.4M86.42 298.7V300.4M95.79 303.4V305.1M100.48 303.4V305.1M102.04 301.9V303.5M106.73 319.1V325.3M108.29 317.5V320.6M109.86 314.4V323.7M112.98 319.1V320.7M116.11 312.8V317.5M117.67 308.1V314.4M120.79 311.2V314.4M123.92 309.7V311.3M131.73 319.1V322.2M133.29 317.5V319.1M134.86 317.5V319.1M147.36 333.1V337.8M158.29 351.9V353.5M161.42 348.7V356.6M167.67 353.4V355.1M169.23 351.9V356.6M170.79 350.3V355.0M172.36 348.7V350.4M173.92 347.2V350.3M177.04 344.1V348.7M178.61 342.5V345.6M180.17 342.5V344.1M181.73 339.4V342.5M183.29 337.8V344.1M187.98 345.6V348.7M189.54 344.1V345.7M194.23 340.9V351.9M195.79 340.9V345.6M197.36 334.7V340.9M200.48 319.1V331.6M202.04 314.4V323.7M203.61 312.8V317.5M209.86 311.2V317.5M211.42 306.6V315.9M212.98 306.6V311.2M214.54 301.9V308.1M216.11 298.7V303.4M217.67 290.9V298.7M219.23 287.8V292.5M223.92 290.9V294.1M225.48 289.4V291.0M227.04 287.8V289.4M228.61 281.6V287.8M230.17 273.7V281.6M231.73 270.6V275.3M237.98 275.3V280.0M239.54 273.7V278.4M248.92 278.4V284.7M250.48 280.0V281.6M255.17 278.4V281.6M256.73 276.9V278.5M258.29 275.3V280.0M262.98 276.9V280.0M264.54 270.6V280.0M278.61 275.3V280.0M280.17 276.9V278.5M281.73 272.2V281.6M284.86 276.9V284.7M287.98 276.9V281.6M289.54 275.3V280.0M292.67 276.9V278.5M294.23 278.4V280.1M295.79 273.7V280.0M297.36 273.7V275.4M302.04 272.2V275.3M303.61 272.2V273.8M308.29 275.3V276.9M309.86 270.6V276.9M316.11 276.9V280.0M319.23 281.6V283.2M322.36 281.6V283.2M323.92 280.0V281.6M330.17 272.2V275.3M336.42 273.7V276.9M337.98 273.7V275.4M341.11 270.6V273.7M358.29 289.4V294.1M361.42 292.5V295.6M362.98 290.9V292.6M364.54 287.8V290.9M373.92 289.4V291.0M378.61 289.4V295.6M381.73 286.2V289.4M383.29 284.7V287.8M387.98 281.6V283.2M389.54 281.6V283.2M391.11 281.6V283.2M403.61 290.9V292.6M405.17 287.8V292.5M411.42 283.1V287.8M412.98 281.6V284.7M416.11 281.6V283.2M427.04 292.5V294.1M430.17 294.1V295.7M431.73 292.5V294.1M433.29 290.9V292.6M444.23 289.4V291.0M445.79 287.8V289.4M447.36 286.2V287.9M448.92 287.8V289.4M452.04 287.8V289.4M453.61 286.2V287.9M458.29 289.4V291.0M459.86 289.4V291.0M461.42 289.4V291.0M464.54 289.4V292.5M466.11 290.9V292.6M467.67 292.5V294.1M487.98 305.0V306.6M489.54 303.4V306.6M495.79 306.6V308.2M497.36 306.6V308.2M503.61 306.6V309.7M505.17 305.0V308.1M506.73 305.0V306.6M514.54 309.7V312.8M517.67 309.7V311.3M519.23 309.7V311.3M520.79 309.7V311.3M523.92 309.7V311.3M528.61 309.7V312.8M530.17 308.1V309.8M533.29 308.1V311.2M552.04 319.1V320.7M553.61 317.5V320.6M555.17 317.5V319.1M561.42 317.5V320.6M562.98 315.9V320.6M564.54 315.9V317.6M570.79 319.1V320.7M572.36 317.5V320.6M573.92 315.9V319.1M575.48 315.9V317.6M577.04 315.9V317.6M580.17 314.4V316.0M583.29 314.4V316.0M584.86 314.4V316.0M586.42 312.8V315.9M587.98 311.2V314.4M591.11 309.7V311.3M592.67 308.1V311.2M594.23 306.6V309.7M598.92 306.6V309.7M600.48 306.6V309.7M602.04 306.6V308.2M603.61 306.6V308.2M605.17 305.0V306.6M609.86 303.4V305.1M616.11 306.6V309.7M625.48 312.8V315.9M627.04 311.2V314.4M628.61 311.2V312.9M630.17 311.2V312.9M631.73 309.7V311.3M634.86 306.6V308.2M637.98 303.4V305.1M642.67 305.0V308.1M644.23 305.0V306.6M648.92 303.4V305.1M652.04 301.9V303.5M653.61 298.7V303.4M667.67 303.4V305.1M669.23 300.3V305.0M670.79 300.3V303.4M672.36 298.7V300.4M675.48 297.2V298.8M680.17 295.6V300.3M681.73 294.1V298.7M683.29 292.5V295.6M687.98 292.5V294.1M689.54 289.4V294.1M691.11 289.4V291.0M695.79 289.4V292.5M697.36 284.7V289.4M698.92 281.6V284.7M700.48 281.6V283.2M706.73 281.6V284.7M708.29 280.0V283.1M711.42 276.9V280.0M712.98 278.4V280.1M714.54 276.9V278.5M722.36 278.4V281.6M723.92 280.0V281.6M731.73 280.0V281.6M733.29 236.2V237.9M734.86 233.1V236.2M741.11 237.8V239.4M744.23 237.8V239.4M745.79 236.2V239.4M748.92 236.2V239.4M755.17 236.2V239.4M756.73 236.2V237.9M758.29 236.2V237.9M759.86 237.8V239.4M761.42 236.2V240.9M766.11 234.7V240.9M772.36 237.8V239.4M775.48 239.4V241.0M777.04 239.4V241.0M780.17 240.9V242.6M781.73 239.4V241.0M791.11 242.5V244.1M792.67 237.8V244.1M794.23 236.2V239.4M798.92 237.8V239.4M802.04 237.8V239.4M803.61 236.2V239.4M805.17 234.7V239.4M816.11 236.2V240.9M822.36 245.6V247.3M823.92 244.1V245.7M825.48 240.9V245.6M831.73 237.8V240.9M833.29 236.2V237.9M834.86 234.7V236.3M839.54 237.8V239.4M844.23 230.0V233.1M847.36 228.4V231.6M848.92 226.9V230.0M850.48 225.3V226.9M852.04 223.7V226.9M855.17 222.2V223.8M856.73 222.2V223.8M858.29 219.1V222.2M867.67 222.2V225.3M869.23 222.2V223.8M873.92 223.7V225.4M875.48 223.7V225.4M883.29 220.6V225.3M884.86 219.1V223.7M889.54 219.1V220.7M891.11 217.5V219.1M894.23 219.1V222.2M897.36 219.1V222.2M898.92 217.5V219.1M900.48 215.9V219.1M902.04 214.4V216.0M903.61 212.8V214.4M905.17 212.8V214.4M906.73 209.7V214.4M920.79 211.2V215.9M922.36 211.2V214.4M923.92 211.2V212.9M925.48 209.7V211.3M927.04 209.7V211.3M928.61 208.1V209.8M930.17 206.6V208.2M936.42 208.1V209.8M937.98 205.0V209.7M942.67 209.7V211.3M944.23 206.6V211.2M945.79 206.6V208.2M947.36 205.0V208.1M948.92 205.0V206.6M952.04 206.6V209.7M955.17 209.7V211.3M956.73 209.7V211.3M958.29 208.1V209.8M959.86 206.6V208.2M961.42 205.0V206.6M962.98 205.0V206.6M978.61 212.8V214.4M980.17 214.4V216.0M981.73 212.8V215.9M986.42 217.5V220.6M987.98 214.4V217.5M989.54 212.8V214.4M992.67 209.7V215.9M994.23 209.7V211.3M998.92 209.7V211.3M1002.04 209.7V211.3M1005.17 208.1V211.2M1011.42 206.6V208.2M1012.98 203.4V208.1M1014.54 201.9V206.6M1016.11 203.4V205.1M1019.23 203.4V205.1M1022.36 203.4V205.1M1025.48 205.0V206.6M1027.04 203.4V205.1M1037.98 203.4V205.1M1047.36 205.0V206.6M1048.92 205.0V206.6M1050.48 201.9V205.0M1052.04 200.3V203.4M1053.61 198.7V200.4M1055.17 195.6V200.3M1067.67 211.2V212.9M1069.23 208.1V211.2M1072.36 206.6V208.2M1073.92 206.6V208.2M1078.61 208.1V209.8M1080.17 206.6V208.2M1081.73 203.4V208.1M1089.54 215.9V219.1M1091.11 211.2V215.9M1103.61 211.2V214.4M1108.29 209.7V211.3M1111.42 206.6V209.7M1112.98 205.0V206.6M1114.54 205.0V206.6M1119.23 208.1V209.8M1120.79 209.7V211.3M1125.48 205.0V212.8M1127.04 201.9V206.6M1131.73 201.9V203.5M1134.86 200.3V203.4M1144.23 201.9V203.5M1145.79 201.9V205.0M1147.36 203.4V205.1M1150.48 201.9V206.6M1152.04 200.3V203.4M1156.73 195.6V198.7M1162.98 194.1V197.2M1164.54 194.1V195.7M1172.36 192.5V194.1M1187.98 195.6V198.7M1189.54 195.6V198.7M1191.11 195.6V198.7M1192.67 194.1V195.7M1194.23 190.9V195.6M1195.79 190.9V192.6M1197.36 189.4V191.0M1200.48 189.4V194.1M1203.61 187.8V194.1M1205.17 189.4V192.5M1206.73 187.8V190.9M1208.29 181.6V190.9M1209.86 183.1V184.8M1211.42 181.6V184.7M1214.54 178.4V181.6M1220.79 180.0V187.8M1222.36 178.4V187.8M1223.92 178.4V183.1M1225.48 176.9V181.6M1227.04 175.3V180.0M1228.61 176.9V178.5M1231.73 176.9V178.5M1233.29 175.3V176.9M1234.86 173.7V176.9M1241.11 175.3V176.9M1250.48 183.1V186.2M1252.04 181.6V184.7M1253.61 178.4V184.7M1255.17 175.3V180.0M1256.73 172.2V176.9M1258.29 170.6V172.3M1261.42 170.6V173.7M1262.98 170.6V172.3M1264.54 169.1V172.2M1266.11 167.5V170.6M1267.67 164.4V169.1M1275.48 162.8V165.9M1278.61 161.2V162.9M1280.17 158.1V161.2M1284.86 150.3V153.4M1287.98 151.9V153.5M1289.54 150.3V153.4M1292.67 150.3V151.9M1295.79 148.7V150.4M1297.36 147.2V150.3M1298.92 145.6V148.7M1300.48 142.5V148.7M1308.29 150.3V153.4M1312.98 150.3V156.6M1314.54 145.6V155.0M1316.11 145.6V151.9M1319.23 145.6V148.7M1320.79 140.9V148.7M1322.36 142.5V144.1M1323.92 140.9V142.6M1339.54 147.2V151.9M1341.11 148.7V150.4M1342.67 144.1V148.7M1344.23 142.5V145.6M1345.79 140.9V144.1M1348.92 140.9V144.1M1350.48 139.4V142.5M1352.04 136.2V142.5M1362.98 137.8V145.6M1364.54 133.1V137.8M1366.11 130.0V134.7M1367.67 128.4V131.6M1369.23 125.3V128.4M1370.79 123.7V128.4M1372.36 122.2V125.3M1375.48 123.7V128.4M1377.04 120.6V125.3M1378.61 119.0V122.2M1380.17 115.9V123.7M1381.73 115.9V119.0M1383.29 114.4V117.5M1384.86 112.8V115.9M1386.42 111.2V114.4M1387.98 109.7V114.4M1389.54 109.7V111.3M1397.36 112.8V115.9M1398.92 111.2V114.4M1400.48 108.1V112.8M1402.04 106.5V111.2M1403.61 106.5V108.2M1408.29 105.0V108.1M1409.86 103.4V105.1M1411.42 100.3V103.4M1412.98 98.7V103.4M1414.54 97.2V100.3M1416.11 95.6V98.7M1420.79 90.9V94.0M1425.48 97.2V100.3M1427.04 97.2V98.8M1428.61 95.6V98.7M1441.11 100.3V106.5M1442.67 100.3V101.9M1448.92 105.0V111.2M1450.48 105.0V106.6M1452.04 103.4V105.1M1459.86 105.0V108.1M1461.42 103.4V106.5M1481.73 125.3V128.4M1489.54 130.0V131.6M1491.11 128.4V130.1M1492.67 128.4V130.1M1494.23 126.9V130.0M1497.36 125.3V126.9M1498.92 123.7V125.4M1505.17 126.9V130.0M1516.11 128.4V131.6M1519.23 125.3V126.9M1522.36 126.9V128.5M1525.48 123.7V126.9M1528.61 120.6V123.7M1530.17 120.6V122.3M1531.73 119.0V122.2M1533.29 120.6V122.3M1536.42 123.7V126.9M1539.54 126.9V130.0M1542.67 130.0V131.6M1545.79 128.4V130.1M1553.61 120.6V122.3M1555.17 117.5V120.6M1556.73 114.4V119.0M1558.29 114.4V116.0M1559.86 111.2V114.4M1566.11 117.5V119.1M1577.04 120.6V122.3M1578.61 117.5V120.6M1581.73 112.8V119.0M1583.29 109.7V112.8M1592.67 114.4V116.0M1594.23 112.8V114.4M1597.36 112.8V114.4M1598.92 111.2V112.9M1600.48 111.2V112.9M1603.61 111.2V112.9M1616.11 119.0V120.7M1620.79 119.0V120.7M1623.92 115.9V117.6M1627.04 112.8V114.4M1631.73 112.8V114.4M1636.42 115.9V117.6M1641.11 117.5V119.1M1653.61 122.2V123.8M1656.73 123.7V125.4M1659.86 119.0V122.2M1661.42 119.0V120.7M1678.61 128.4V130.1M1689.54 128.4V131.6M1692.67 128.4V130.1M1702.04 131.6V133.2M1705.17 130.0V131.6M1708.29 128.4V130.1M1719.23 126.9V128.5M1722.36 125.3V126.9M1723.92 123.7V125.4M1725.48 123.7V125.4M1739.54 128.4V130.1M1742.67 130.0V131.6M1747.36 131.6V133.2M1772.36 137.8V139.4M1775.48 137.8V140.9M1780.17 139.4V141.0M1783.29 137.8V139.4M1784.86 136.2V137.9M1808.29 147.2V150.3M1812.98 145.6V147.3M1817.67 145.6V147.3M1823.92 144.1V145.7M1836.42 148.7V150.4M1839.54 145.6V147.3M1844.23 147.2V150.3M1845.79 147.2V148.8M1853.61 147.2V148.8M1862.98 151.9V153.5M1864.54 148.7V151.9M1866.11 145.6V148.7M1873.92 150.3V151.9M1883.29 156.6V158.2M1884.86 155.0V156.6M1887.98 155.0V156.6M1894.23 153.4V156.6M1895.79 151.9V155.0M1897.36 151.9V153.5" stroke="#ff0000" stroke-width="1.7" fill="none"/>
<path d="M221.8 288.6H223.4V294.8H221.8Z" fill="#f3ef6c"/>
<path d="M103.6 300.8H105.6V326.2H103.6ZM218.6 285.5H220.2V292.9H218.6ZM231.0 268.6H232.6V277.4H231.0ZM1085.5 212.8H1088.3V219.7H1085.5Z" fill="#0a84ff"/>
<path d="M220.2 287.9H221.8V294.8H220.2ZM223.4 287.9H225.0V294.8H223.4ZM732.5 232.9H734.2V240.0H732.5ZM1088.5 214.7H1091.5V219.7H1088.5Z" fill="#ff0000"/>
<path d="M78.61 661.2V662.9M136.42 665.9V669.0M162.98 706.5V708.2M181.73 700.3V701.9M191.11 700.3V703.4M203.61 683.1V684.8M212.98 676.9V678.5M233.29 659.7V661.3M248.92 673.7V675.4M252.04 672.2V673.8M269.23 655.0V656.6M273.92 653.4V655.1M275.48 653.4V655.1M287.98 656.5V658.2M302.04 636.2V637.9M330.17 639.4V641.0M333.29 639.4V641.0M339.54 636.2V637.9M353.61 653.4V655.1M358.29 659.7V661.3M362.98 656.5V658.2M372.36 656.5V658.2M375.48 656.5V658.2M402.04 651.9V653.5M416.11 655.0V656.6M422.36 655.0V658.1M425.48 656.5V659.7M436.42 672.2V673.8M439.54 672.2V673.8M444.23 670.6V672.3M447.36 670.6V672.3M450.48 672.2V673.8M452.04 670.6V672.3M456.73 672.2V673.8M464.54 672.2V673.8M466.11 672.2V673.8M469.23 675.3V676.9M470.79 675.3V678.4M472.36 676.9V680.0M478.61 680.0V683.1M480.17 681.5V683.2M481.73 683.1V684.8M483.29 683.1V684.8M486.42 681.5V683.2M489.54 683.1V686.2M491.11 684.7V686.3M498.92 676.9V678.5M503.61 673.7V675.4M506.73 675.3V678.4M508.29 676.9V678.5M511.42 678.4V680.1M512.98 678.4V681.5M514.54 680.0V681.6M516.11 680.0V681.6M517.67 680.0V681.6M525.48 678.4V681.5M530.17 683.1V684.8M541.11 687.8V689.4M542.67 687.8V689.4M555.17 695.6V697.3M561.42 689.4V691.0M562.98 687.8V689.4M570.79 687.8V689.4M572.36 687.8V689.4M573.92 687.8V689.4M581.73 683.1V684.8M592.67 676.9V678.5M595.79 676.9V678.5M602.04 673.7V675.4M603.61 673.7V676.9M609.86 673.7V675.4M611.42 673.7V675.4M614.54 675.3V676.9M616.11 676.9V678.5M617.67 676.9V678.5M619.23 676.9V678.5M630.17 678.4V680.1M633.29 675.3V676.9M634.86 675.3V676.9M636.42 675.3V676.9M637.98 675.3V676.9M641.11 678.4V681.5M642.67 680.0V681.6M648.92 676.9V678.5M650.48 676.9V678.5M652.04 676.9V678.5M655.17 678.4V680.1M658.29 680.0V681.6M661.42 678.4V680.1M662.98 680.0V681.6M664.54 680.0V681.6M667.67 676.9V678.5M673.92 665.9V669.0M678.61 669.0V670.7M681.73 664.4V666.0M683.29 662.8V664.4M684.86 659.7V662.8M689.54 662.8V664.4M691.11 661.2V662.9M694.23 661.2V662.9M698.92 653.4V655.1M709.86 648.7V650.4M717.67 650.3V651.9M719.23 650.3V651.9M722.36 650.3V651.9M725.48 648.7V650.4M730.17 648.7V650.4M733.29 590.9V592.6M756.73 584.7V586.3M761.42 575.3V576.9M766.11 586.2V589.4M789.54 575.3V578.4M806.73 570.6V572.3M816.11 572.2V573.8M839.54 564.4V566.0M845.79 550.3V553.4M852.04 545.6V547.3M872.36 531.5V533.2M877.04 523.7V525.4M884.86 520.6V522.3M908.29 512.8V515.9M920.79 515.9V517.6M930.17 511.2V512.9M933.29 509.7V511.3M942.67 500.3V503.4M947.36 503.4V505.1M948.92 503.4V505.1M950.48 505.0V506.6M958.29 500.3V501.9M962.98 503.4V505.1M966.11 500.3V501.9M978.61 503.4V505.1M1002.04 509.7V511.3M1003.61 511.2V512.9M1006.73 508.1V509.8M1044.23 495.6V497.3M1058.29 494.1V495.7M1075.48 505.0V506.6M1106.73 523.7V525.4M1111.42 526.9V528.5M1112.98 528.4V530.1M1147.36 528.4V530.1M1150.48 526.9V528.5M1159.86 511.2V512.9M1164.54 497.2V498.8M1169.23 497.2V498.8M1183.29 514.4V516.0M1186.42 508.1V509.8M1191.11 503.4V505.1M1203.61 478.4V480.1M1209.86 476.9V478.5M1236.42 481.6V483.2M1245.79 484.7V486.3M1262.98 458.1V459.8M1275.48 470.6V472.3M1283.29 465.9V467.6M1302.04 451.9V453.5M1323.92 455.0V456.6M1334.86 456.6V458.2M1364.54 456.6V459.7M1369.23 434.7V436.3M1370.79 431.6V433.2M1375.48 440.9V442.6M1395.79 434.7V436.3M1400.48 431.6V434.7M1403.61 434.7V437.8M1439.54 458.1V459.8" stroke="#f3ef6c" stroke-width="1.7" fill="none"/>
<path d="M87.98 656.5V658.2M91.11 656.5V662.8M94.23 662.8V664.4M95.79 662.8V664.4M97.36 664.4V666.0M98.92 664.4V667.5M100.48 664.4V669.0M102.04 665.9V669.0M103.61 667.5V670.6M105.17 665.9V684.7M109.86 680.0V683.1M111.42 681.5V683.2M127.04 665.9V667.6M128.61 665.9V672.2M130.17 669.0V676.9M137.98 665.9V672.2M139.54 670.6V673.7M141.11 672.2V675.3M147.36 683.1V690.9M148.92 689.4V692.5M150.48 692.5V698.7M152.04 698.7V700.4M153.61 695.6V698.7M156.73 697.2V701.9M158.29 700.3V705.0M159.86 705.0V709.7M170.79 705.0V708.1M172.36 703.4V709.7M180.17 698.7V701.9M184.86 695.6V700.3M186.42 697.2V701.9M187.98 701.9V703.5M192.67 701.9V703.5M200.48 683.1V684.8M202.04 683.1V684.8M220.79 662.8V667.5M222.36 662.8V669.0M234.86 659.7V662.8M236.42 659.7V665.9M237.98 661.2V665.9M241.11 662.8V665.9M242.67 665.9V670.6M245.79 669.0V673.7M247.36 670.6V675.3M253.61 670.6V675.3M258.29 665.9V669.0M277.04 650.3V659.7M281.73 651.9V655.0M283.29 651.9V656.5M286.42 655.0V656.6M303.61 636.2V637.9M305.17 636.2V637.9M311.42 634.7V637.8M312.98 636.2V639.4M314.54 639.4V641.0M316.11 639.4V641.0M317.67 640.9V645.6M319.23 644.0V647.2M323.92 640.9V642.6M325.48 642.5V644.1M331.73 637.8V639.4M342.67 634.7V636.3M344.23 636.2V639.4M345.79 637.8V642.5M347.36 640.9V645.6M348.92 644.0V647.2M350.48 645.6V650.3M352.04 648.7V653.4M356.73 655.0V659.7M367.67 655.0V658.1M369.23 656.5V659.7M373.92 656.5V658.2M378.61 653.4V658.1M391.11 645.6V648.7M394.23 648.7V650.4M397.36 648.7V653.4M398.92 650.3V651.9M405.17 655.0V656.6M420.79 651.9V656.5M423.92 656.5V658.2M427.04 658.1V661.2M428.61 661.2V669.0M431.73 670.6V672.3M434.86 672.2V673.8M448.92 670.6V673.7M453.61 670.6V672.3M455.17 670.6V673.7M458.29 673.7V675.4M467.67 673.7V675.4M475.48 680.0V683.1M477.04 681.5V683.2M487.98 683.1V684.8M505.17 675.3V676.9M533.29 683.1V684.8M536.42 684.7V686.3M544.23 687.8V689.4M580.17 683.1V684.8M608.29 672.2V673.8M620.79 676.9V678.5M623.92 678.4V684.7M639.54 675.3V678.4M653.61 676.9V678.5M656.73 678.4V680.1M659.86 678.4V680.1M672.36 669.0V672.2M703.61 642.5V647.2M712.98 648.7V650.4M736.42 589.4V595.6M737.98 592.5V597.2M739.54 597.2V600.3M742.67 598.7V600.4M762.98 575.3V580.0M764.54 580.0V587.8M770.79 580.0V587.8M772.36 583.1V587.8M773.92 584.7V592.5M786.42 572.2V578.4M787.98 573.7V583.1M791.11 573.7V576.9M795.79 569.0V572.2M798.92 567.5V570.6M800.48 565.9V570.6M802.04 567.5V570.6M803.61 569.0V570.7M805.17 570.6V572.3M808.29 570.6V575.3M814.54 567.5V575.3M817.67 570.6V572.3M825.48 565.9V567.6M831.73 553.4V564.4M833.29 561.2V564.4M837.98 559.7V564.4M856.73 550.3V555.0M859.86 551.9V558.1M878.61 525.3V528.4M880.17 525.3V531.5M892.67 522.2V526.9M902.04 517.5V520.6M909.86 517.5V520.6M914.54 515.9V519.0M925.48 511.2V514.4M927.04 514.4V517.5M931.73 511.2V512.9M941.11 497.2V501.9M944.23 501.9V503.5M972.36 494.1V497.2M973.92 495.6V501.9M975.48 500.3V501.9M977.04 501.9V503.5M981.73 501.9V505.0M986.42 501.9V506.6M987.98 505.0V509.7M995.79 505.0V506.6M998.92 505.0V509.7M1000.48 508.1V509.8M1009.86 506.6V508.2M1011.42 508.1V511.2M1019.23 500.3V505.0M1020.79 503.4V509.7M1028.61 497.2V498.8M1030.17 497.2V500.3M1041.11 494.1V495.7M1042.67 495.6V497.3M1045.79 497.2V498.8M1047.36 497.2V500.3M1055.17 494.1V495.7M1059.86 495.6V497.3M1061.42 497.2V498.8M1062.98 498.7V500.4M1064.54 500.3V501.9M1070.79 497.2V498.8M1073.92 498.7V505.0M1078.61 498.7V503.4M1081.73 500.3V501.9M1084.86 501.9V508.1M1089.54 509.7V511.3M1091.11 511.2V514.4M1092.67 512.8V514.4M1098.92 515.9V519.0M1102.04 517.5V519.1M1103.61 517.5V520.6M1108.29 523.7V526.9M1109.86 525.3V526.9M1114.54 528.4V533.1M1116.11 530.0V536.2M1120.79 536.2V539.4M1122.36 534.7V537.8M1125.48 534.7V536.3M1134.86 526.9V528.5M1137.98 523.7V525.4M1141.11 525.3V526.9M1142.67 526.9V528.5M1144.23 526.9V530.0M1145.79 528.4V530.1M1161.42 501.9V509.7M1166.11 497.2V498.8M1170.79 497.2V501.9M1172.36 501.9V503.5M1177.04 506.6V508.2M1178.61 508.1V509.8M1181.73 511.2V515.9M1205.17 475.3V481.6M1211.42 476.9V481.6M1212.98 476.9V481.6M1216.11 478.4V481.6M1219.23 481.6V487.8M1220.79 481.6V489.4M1230.17 475.3V478.4M1233.29 476.9V478.5M1234.86 476.9V480.0M1259.86 451.9V458.1M1261.42 453.4V459.7M1264.54 458.1V465.9M1273.92 464.4V472.2M1291.11 451.9V458.1M1295.79 456.6V458.2M1297.36 455.0V456.6M1303.61 456.6V461.2M1305.17 459.7V464.4M1306.73 461.2V464.4M1308.29 462.8V464.4M1309.86 462.8V469.1M1325.48 455.0V458.1M1330.17 459.7V461.3M1342.67 450.3V453.4M1344.23 450.3V455.0M1345.79 453.4V455.1M1355.17 459.7V464.4M1356.73 461.2V469.1M1358.29 467.5V475.3M1359.86 472.2V478.4M1373.92 437.8V442.5M1381.73 436.2V439.4M1387.98 425.3V430.0M1389.54 428.4V433.1M1391.11 430.0V436.2M1392.67 433.1V436.2M1394.23 433.1V436.2M1402.04 433.1V434.8M1405.17 437.8V445.6M1414.54 451.9V458.1M1422.36 451.9V455.0M1423.92 453.4V458.1M1427.04 456.6V458.2M1428.61 456.6V458.2M1434.86 453.4V458.1M1436.42 456.6V459.7" stroke="#0a84ff" stroke-width="1.7" fill="none"/>
<path d="M80.17 659.7V662.8M81.73 658.1V661.2M83.29 658.1V659.8M84.86 656.5V661.2M92.67 658.1V664.4M106.73 681.5V683.2M108.29 680.0V683.1M112.98 680.0V683.1M114.54 676.9V683.1M116.11 676.9V680.0M119.23 673.7V675.4M120.79 672.2V673.8M122.36 667.5V673.7M123.92 664.4V669.0M125.48 665.9V667.6M133.29 669.0V672.2M134.86 667.5V670.6M145.79 681.5V684.7M161.42 706.5V708.2M164.54 706.5V708.2M166.11 705.0V706.6M167.67 705.0V706.6M175.48 698.7V705.0M177.04 697.2V703.4M178.61 697.2V703.4M189.54 701.9V703.5M194.23 698.7V703.4M197.36 695.6V700.3M198.92 681.5V700.3M205.17 681.5V687.8M206.73 683.1V686.2M209.86 676.9V683.1M211.42 675.3V678.4M214.54 670.6V680.0M216.11 669.0V673.7M225.48 664.4V667.5M227.04 664.4V666.0M228.61 662.8V664.4M230.17 659.7V662.8M239.54 664.4V666.0M244.23 669.0V670.7M250.48 672.2V676.9M255.17 670.6V673.7M256.73 667.5V672.2M259.86 665.9V667.6M261.42 662.8V664.4M262.98 658.1V664.4M264.54 658.1V659.8M266.11 656.5V658.2M267.67 656.5V658.2M270.79 653.4V656.5M272.36 653.4V655.1M278.61 653.4V659.7M280.17 651.9V656.5M289.54 655.0V656.6M291.11 653.4V658.1M292.67 650.3V658.1M294.23 647.2V655.0M298.92 636.2V640.9M300.48 636.2V637.9M306.73 636.2V637.9M308.29 634.7V637.8M309.86 634.7V636.3M320.79 642.5V645.6M322.36 640.9V642.6M327.04 640.9V644.0M328.61 640.9V642.6M334.86 640.9V642.6M336.42 639.4V642.5M337.98 636.2V640.9M341.11 634.7V637.8M355.17 653.4V655.1M359.86 659.7V661.3M364.54 655.0V656.6M370.79 656.5V658.2M377.04 656.5V658.2M380.17 651.9V655.0M381.73 651.9V653.5M383.29 648.7V651.9M384.86 645.6V648.7M389.54 645.6V647.3M411.42 655.0V658.1M417.67 653.4V656.5M441.11 672.2V673.8M442.67 672.2V673.8M445.79 670.6V672.3M459.86 673.7V675.4M461.42 672.2V673.8M462.98 672.2V673.8M484.86 681.5V683.2M494.23 681.5V684.7M495.79 678.4V681.5M500.48 676.9V678.5M502.04 673.7V678.4M575.48 686.2V687.9M578.61 684.7V686.3M587.98 680.0V681.6M589.54 676.9V681.5M598.92 673.7V675.4M622.36 676.9V678.5M627.04 681.5V683.2M628.61 680.0V681.6M631.73 675.3V678.4M645.79 676.9V678.5M647.36 676.9V678.5M669.23 673.7V675.4M670.79 672.2V673.8M695.79 659.7V661.3M700.48 648.7V653.4M706.73 648.7V651.9M708.29 648.7V651.9M714.54 648.7V650.4M720.79 650.3V651.9M723.92 650.3V651.9M734.86 590.9V592.6M741.11 597.2V601.9M744.23 598.7V603.4M745.79 592.5V601.9M747.36 592.5V598.7M748.92 590.9V594.0M750.48 587.8V595.6M752.04 587.8V590.9M753.61 586.2V589.4M755.17 583.1V586.2M758.29 580.0V586.2M759.86 573.7V581.5M767.67 584.7V587.8M769.23 584.7V586.3M775.48 587.8V594.0M777.04 587.8V589.4M778.61 586.2V589.4M780.17 583.1V587.8M781.73 578.4V583.1M783.29 575.3V580.0M784.86 573.7V575.4M792.67 572.2V575.3M794.23 570.6V573.7M797.36 570.6V572.3M809.86 570.6V575.3M811.42 570.6V573.7M812.98 567.5V572.2M819.23 569.0V575.3M820.79 569.0V572.2M822.36 565.9V570.6M823.92 565.9V567.6M827.04 561.2V567.5M828.61 556.5V561.2M830.17 555.0V556.6M834.86 559.7V565.9M836.42 559.7V562.8M841.11 559.7V565.9M842.67 558.1V562.8M844.23 550.3V559.7M848.92 548.7V551.9M850.48 544.0V553.4M858.29 551.9V553.5M861.42 556.5V558.2M866.11 539.4V545.6M869.23 534.7V537.8M870.79 531.5V537.8M873.92 530.0V531.6M875.48 523.7V531.5M883.29 522.2V523.8M886.42 519.0V523.7M887.98 517.5V522.2M889.54 519.0V520.7M894.23 523.7V530.0M895.79 523.7V525.4M900.48 519.0V522.2M903.61 515.9V519.0M906.73 512.8V515.9M911.42 515.9V519.0M916.11 512.8V520.6M922.36 512.8V515.9M928.61 511.2V514.4M934.86 509.7V511.3M936.42 505.0V509.7M937.98 497.2V506.6M952.04 503.4V506.6M953.61 503.4V506.6M955.17 501.9V505.0M959.86 500.3V503.4M961.42 503.4V505.1M967.67 498.7V500.4M983.29 503.4V506.6M984.86 501.9V506.6M991.11 505.0V508.1M992.67 503.4V508.1M994.23 505.0V506.6M1012.98 509.7V512.8M1016.11 503.4V508.1M1023.92 500.3V503.4M1025.48 498.7V500.4M1027.04 498.7V500.4M1031.73 498.7V500.4M1033.29 498.7V500.4M1034.86 497.2V500.3M1037.98 497.2V498.8M1039.54 494.1V497.2M1048.92 498.7V500.4M1050.48 495.6V498.7M1052.04 495.6V497.3M1053.61 494.1V495.7M1056.73 494.1V495.7M1067.67 500.3V501.9M1077.04 498.7V505.0M1080.17 501.9V505.0M1083.29 500.3V503.4M1094.23 512.8V514.4M1095.79 511.2V514.4M1105.17 519.0V523.7M1117.67 534.7V539.4M1119.23 537.8V539.4M1127.04 533.1V537.8M1128.61 533.1V536.2M1130.17 531.5V534.7M1131.73 530.0V533.1M1133.29 528.4V530.1M1136.42 523.7V528.4M1148.92 528.4V530.1M1153.61 523.7V526.9M1155.17 517.5V523.7M1158.29 514.4V516.0M1162.98 498.7V503.4M1167.67 497.2V500.3M1184.86 509.7V514.4M1189.54 506.6V509.7M1192.67 495.6V503.4M1194.23 492.5V498.7M1195.79 489.4V494.1M1206.73 476.9V480.0M1222.36 481.6V484.7M1223.92 476.9V483.1M1225.48 475.3V478.4M1227.04 475.3V476.9M1228.61 475.3V476.9M1239.54 486.2V490.9M1241.11 486.2V487.9M1242.67 487.8V489.4M1244.23 486.2V489.4M1248.92 473.7V481.6M1250.48 475.3V476.9M1255.17 461.2V475.3M1256.73 456.6V462.8M1258.29 451.9V456.6M1267.67 465.9V467.6M1269.23 462.8V467.5M1272.36 464.4V469.1M1278.61 465.9V470.6M1280.17 462.8V469.1M1281.73 462.8V469.1M1286.42 462.8V465.9M1287.98 461.2V464.4M1289.54 455.0V462.8M1292.67 453.4V455.1M1298.92 453.4V456.6M1300.48 447.2V456.6M1311.42 464.4V470.6M1312.98 462.8V467.5M1314.54 461.2V462.9M1317.67 459.7V461.3M1319.23 455.0V461.2M1322.36 455.0V459.7M1328.61 461.2V462.9M1333.29 455.0V459.7M1337.98 453.4V455.1M1339.54 451.9V453.5M1341.11 450.3V451.9M1348.92 453.4V456.6M1361.42 470.6V476.9M1362.98 462.8V472.2M1372.36 434.7V440.9M1377.04 440.9V442.6M1380.17 437.8V439.4M1383.29 431.6V440.9M1384.86 423.7V433.1M1397.36 431.6V437.8M1398.92 433.1V434.8M1409.86 451.9V455.0M1411.42 450.3V453.4M1416.11 456.6V458.2M1419.23 451.9V458.1M1420.79 450.3V456.6M1431.73 456.6V461.2" stroke="#ff0000" stroke-width="1.7" fill="none"/>
<path d="M13.4 678.7H16.8V680.7H13.4ZM17.4 675.9H19.9V677.8H17.4ZM20.5 674.4H23.7V676.3H20.5ZM24.3 676.9H26.2V678.8H24.3ZM25.9 678.9H27.6V680.8H25.9ZM31.1 675.9H35.5V677.8H31.1ZM40.1 678.9H42.6V680.8H40.1ZM43.0 676.1H44.8V678.0H43.0ZM44.8 674.4H47.1V676.3H44.8ZM54.3 672.6H56.7V674.5H54.3ZM60.5 671.2H62.9V673.1H60.5ZM73.0 675.6H75.3V677.5H73.0ZM76.7 680.3H79.2V683.2H76.7ZM1447.2 455.4H1449.3V457.3H1447.2ZM1462.2 441.3H1463.7V443.2H1462.2ZM1464.9 441.5H1466.8V448.0H1464.9ZM1468.0 455.4H1469.9V457.3H1468.0ZM1469.9 461.6H1471.4V463.5H1469.9ZM1471.4 463.2H1473.0V465.1H1471.4ZM1474.6 457.3H1476.1V459.2H1474.6ZM1483.8 453.9H1485.5V455.8H1483.8ZM1485.5 457.0H1487.1V458.9H1485.5ZM1494.8 463.2H1496.7V465.1H1494.8ZM1496.7 457.2H1498.3V459.1H1496.7ZM1498.0 458.7H1499.8V460.6H1498.0ZM1499.5 457.2H1501.3V459.1H1499.5ZM1502.3 463.2H1504.1V465.1H1502.3ZM1505.8 469.4H1507.5V471.3H1505.8ZM1525.9 481.9H1527.8V483.8H1525.9ZM1527.2 477.2H1530.9V479.1H1527.2ZM1539.0 477.2H1540.6V479.1H1539.0ZM1541.5 486.6H1544.9V488.5H1541.5ZM1544.9 478.5H1548.3V480.7H1544.9ZM1547.7 477.2H1552.7V479.1H1547.7ZM1552.1 467.9H1555.8V469.8H1552.1ZM1553.9 463.2H1557.1V465.1H1553.9ZM1557.1 464.8H1560.2V466.7H1557.1ZM1560.2 467.9H1563.9V469.8H1560.2ZM1563.3 463.2H1566.8V465.1H1563.3ZM1575.7 471.0H1579.2V472.9H1575.7ZM1582.0 463.2H1585.1V465.1H1582.0ZM1585.1 461.6H1588.8V463.5H1585.1ZM1588.8 463.2H1591.9V465.1H1588.8ZM1591.3 458.5H1595.0V460.4H1591.3ZM1599.4 453.9H1601.3V455.8H1599.4ZM1601.0 452.3H1602.9V454.2H1601.0ZM1606.9 455.4H1609.1V457.3H1606.9ZM1621.4 457.0H1623.1V458.9H1621.4ZM1627.0 457.0H1629.3V458.9H1627.0ZM1633.4 458.5H1635.5V460.4H1633.4ZM1643.0 457.0H1648.0V458.9H1643.0ZM1650.5 460.2H1652.7V462.1H1650.5ZM1653.6 464.8H1655.8V466.7H1653.6ZM1655.2 461.6H1657.3V463.5H1655.2ZM1659.8 461.6H1662.0V463.5H1659.8ZM1664.8 467.3H1666.7V471.0H1664.8ZM1669.4 481.9H1671.4V483.8H1669.4ZM1674.1 483.4H1679.1V485.3H1674.1ZM1686.8 486.6H1689.7V488.5H1686.8ZM1686.6 489.9H1688.4V491.8H1686.6ZM1686.8 486.9H1690.0V488.8H1686.8ZM1686.8 489.9H1689.0V491.8H1686.8ZM1691.5 484.9H1694.7V486.8H1691.5ZM1694.7 486.9H1698.1V488.8H1694.7ZM1710.3 489.9H1713.6V491.8H1710.3ZM1721.1 483.5H1724.6V485.4H1721.1ZM1724.2 481.9H1727.3V483.8H1724.2ZM1726.1 483.5H1729.2V485.4H1726.1ZM1736.7 489.9H1741.0V491.8H1736.7ZM1739.8 491.6H1744.8V493.5H1739.8ZM1742.9 494.4H1746.6V496.3H1742.9ZM1746.6 489.9H1749.7V491.8H1746.6ZM1752.5 491.6H1756.0V493.5H1752.5ZM1756.6 493.1H1759.1V495.0H1756.6ZM1774.0 499.1H1776.5V501.0H1774.0ZM1780.2 503.7H1782.4V505.9H1780.2ZM1781.9 506.9H1784.4V509.0H1781.9ZM1800.2 513.4H1803.3V515.9H1800.2ZM1805.2 514.0H1809.5V516.5H1805.2ZM1811.4 513.4H1813.9V515.9H1811.4ZM1820.7 513.4H1823.2V515.9H1820.7ZM1824.5 513.4H1828.2V516.1H1824.5ZM1836.7 511.8H1840.0V513.7H1836.7ZM1850.6 522.4H1853.7V524.4H1850.6ZM1858.7 524.3H1862.1V526.2H1858.7ZM1863.3 524.3H1866.8V526.2H1863.3ZM1871.2 525.8H1874.5V527.7H1871.2ZM1877.4 530.2H1880.5V532.1H1877.4ZM1884.9 536.4H1887.3V538.3H1884.9ZM1888.6 536.4H1891.7V538.3H1888.6ZM1891.1 532.1H1893.2V534.0H1891.1ZM1892.7 530.2H1894.8V532.1H1892.7ZM1896.1 498.7H1899.8V501.6H1896.1Z" fill="#f3ef6c"/>
<path d="M103.6 669.1H105.6V684.1H103.6ZM1209.0 468.5H1210.6V484.7H1209.0ZM1355.7 458.5H1357.2V468.5H1355.7ZM1440.0 460.4H1441.9V467.9H1440.0ZM1445.2 452.9H1446.8V458.5H1445.2ZM1478.9 455.4H1480.8V460.4H1478.9ZM1488.6 454.8H1490.4V459.2H1488.6ZM1490.4 455.8H1493.5V458.5H1490.4ZM1504.1 467.9H1506.0V470.4H1504.1ZM1510.4 461.7H1512.0V467.9H1510.4ZM1519.7 477.2H1524.7V479.1H1519.7ZM1523.2 481.0H1526.6V484.7H1523.2ZM1532.2 480.3H1535.6V484.1H1532.2ZM1558.9 463.2H1561.4V465.1H1558.9ZM1620.0 457.0H1621.6V458.9H1620.0ZM1630.3 461.6H1632.4V463.5H1630.3ZM1667.9 475.7H1669.8V477.6H1667.9ZM1683.8 482.2H1686.8V495.3H1683.8ZM1700.9 489.9H1703.9V491.8H1700.9ZM1744.8 491.0H1747.9V492.9H1744.8ZM1764.7 497.8H1766.9V500.9H1764.7ZM1786.5 502.2H1788.7V504.2H1786.5ZM1797.4 508.4H1799.8V511.9H1797.4ZM1825.5 508.2H1827.9V511.5H1825.5ZM1829.4 516.1H1832.6V519.4H1829.4ZM1847.5 513.2H1850.6V516.5H1847.5ZM1849.6 517.1H1852.9V520.9H1849.6ZM1854.3 524.6H1857.5V526.5H1854.3ZM1880.5 532.1H1883.6V535.8H1880.5ZM1882.0 535.8H1885.2V539.6H1882.0ZM1886.7 538.0H1889.8V539.9H1886.7Z" fill="#0a84ff"/>
<path d="M732.5 585.9H734.2V597.7H732.5ZM1254.4 457.9H1256.3V471.0H1254.4ZM1256.3 454.8H1257.9V463.5H1256.3ZM1290.3 449.2H1291.9V457.3H1290.3ZM1362.5 459.8H1364.1V469.8H1362.5ZM1364.1 452.3H1365.8V464.8H1364.1ZM1365.8 442.4H1367.4V457.3H1365.8ZM1367.4 433.6H1369.0V447.3H1367.4ZM1369.4 424.9H1371.0V438.6H1369.4ZM1384.7 419.9H1386.3V428.7H1384.7ZM27.9 674.4H29.6V676.3H27.9ZM1441.9 457.3H1443.5V461.7H1441.9ZM1443.7 452.3H1445.2V454.8H1443.7ZM1449.3 449.8H1451.2V452.3H1449.3ZM1458.7 439.9H1460.5V446.1H1458.7ZM1460.5 437.1H1462.2V439.2H1460.5ZM1472.6 455.4H1474.6V460.4H1472.6ZM1475.9 450.7H1477.6V452.6H1475.9ZM1482.1 455.4H1483.8V460.4H1482.1ZM1508.5 463.5H1510.4V474.1H1508.5ZM1512.0 465.0H1513.7V467.9H1512.0ZM1535.3 476.2H1539.0V480.3H1535.3ZM1550.8 471.0H1554.3V474.5H1550.8ZM1566.4 458.3H1569.8V460.4H1566.4ZM1595.0 457.0H1598.2V458.9H1595.0ZM1647.7 458.5H1649.8V460.4H1647.7ZM1703.9 489.9H1707.1V491.8H1703.9ZM1833.8 514.0H1837.5V516.5H1833.8ZM1853.1 522.7H1855.8V524.6H1853.1ZM1855.8 525.6H1859.3V527.7H1855.8ZM1864.9 521.1H1868.0V523.1H1864.9ZM1875.8 529.0H1879.0V530.9H1875.8Z" fill="#ff0000"/>
<path d="M12.45 990.62H15.57V992.19H17.14V993.75H18.70V995.31H20.26V992.19H21.82V990.62H23.39V992.19H26.51V993.75H29.64V992.19H31.20V990.62H32.76V989.06H34.33V987.50H35.89V989.06H37.45V990.62H39.01V998.44H40.58V996.88H42.14V985.94H45.26V989.06H46.83V993.75H48.39V992.19H49.95V989.06H51.51V985.94H56.20V989.06H57.76V987.50H59.33V982.81H62.45V987.50H64.01V995.31H67.14V992.19H68.70V993.75H71.83V995.31H73.39V996.88H78.08V995.31H79.64V990.62H81.20V981.25H82.76V978.12H84.33V976.56H85.89V975.00H89.01V976.56H90.58V978.12H92.14V981.25H98.39V979.69H101.51V973.44H104.64V998.44H106.20V996.88H107.76V992.19H109.33V993.75H110.89V996.88H112.45V990.62H114.01V989.06H121.83V992.19H123.39V990.62H128.07V1000.00H129.64V1003.12H131.20V1001.56H135.89V1000.00H140.57V1003.12H142.14V1012.50H145.26V1015.62H146.82V1017.19H149.95V1023.44H151.51V1026.56H154.64V1029.69H156.20V1032.81H157.76V1034.38H159.32V1031.25H160.89V1026.56H162.45V1023.44H164.01V1025.00H165.57V1032.81H167.14V1034.38H168.70V1029.69H170.26V1028.12H171.82V1026.56H174.95V1025.00H178.07V1021.88H179.64V1017.19H182.76V1018.75H184.32V1021.88H185.89V1025.00H187.45V1023.44H189.01V1021.88H190.57V1025.00H193.70V1021.88H195.26V1018.75H196.82V1014.06H198.39V1006.25H199.95V996.88H201.51V990.62H203.07V984.38H204.64V985.94H206.20V989.06H209.32V985.94H210.89V981.25H212.45V976.56H214.01V971.88H215.57V967.19H217.14V953.12H218.70V956.25H220.26V954.69H223.39V956.25H224.95V954.69H226.51V953.12H228.07V950.00H229.64V932.81H231.20V931.25H232.76V934.38H234.32V942.19H235.89V940.62H237.45V939.06H239.01V935.94H240.57V932.81H242.14V929.69H246.82V932.81H248.39V935.94H251.51V934.38H253.07V932.81H256.20V931.25H257.76V928.12H259.32V931.25H260.89V940.62H262.45V937.50H264.01V934.38H267.14V932.81H270.26V939.06H271.82V942.19H282.76V943.75H284.32V945.31H285.89V946.88H287.45V942.19H289.01V939.06H290.57V940.62H292.14V942.19H293.70V943.75H295.26V945.31H296.82V946.88H298.39V948.44H299.95V953.12H301.51V948.44H303.07V946.88H306.20V951.56H309.32V950.00H314.01V951.56H317.14V953.12H318.70V956.25H320.26V957.81H321.82V960.94H323.39V957.81H324.95V956.25H326.51V953.12H328.07V951.56H329.64V948.44H331.20V946.88H334.32V948.44H335.89V950.00H339.01V948.44H340.57V945.31H343.70V946.88H345.26V948.44H346.82V950.00H348.39V953.12H353.07V954.69H354.64V959.38H356.20V965.62H357.76V970.31H359.32V965.62H360.89V967.19H362.45V965.62H364.01V964.06H371.82V962.50H373.39V960.94H374.95V962.50H376.51V964.06H378.07V962.50H379.64V960.94H381.20V959.38H382.76V956.25H385.89V957.81H392.14V954.69H393.70V959.38H395.26V962.50H396.82V965.62H398.39V968.75H399.95V971.88H401.51V973.44H404.64V970.31H406.20V965.62H407.76V964.06H409.32V962.50H410.89V957.81H412.45V950.00H418.70V953.12H420.26V960.94H421.82V962.50H424.95V960.94H428.07V959.38H429.64V957.81H431.20V956.25H432.76V950.00H434.32V948.44H437.45V950.00H439.01V951.56H443.70V950.00H445.26V946.88H451.51V948.44H462.45V950.00H464.01V951.56H465.57V953.12H468.70V951.56H470.26V957.81H473.39V954.69H474.95V960.94H476.51V962.50H479.64V960.94H481.20V962.50H482.76V965.62H484.32V967.19H485.89V964.06H487.45V965.62H489.01V967.19H492.14V970.31H493.70V971.88H496.82V973.44H498.39V975.00H499.95V976.56H501.51V978.12H503.07V976.56H504.64V975.00H506.20V973.44H507.76V975.00H509.32V976.56H510.89V979.69H515.58V976.56H521.83V979.69H523.39V981.25H524.95V979.69H526.51V978.12H528.08V976.56H529.64V973.44H531.20V971.88H532.76V970.31H535.89V978.12H537.45V981.25H540.58V982.81H542.14V984.38H543.70V985.94H546.83V987.50H549.95V985.94H551.51V982.81H553.08V981.25H554.64V979.69H557.76V978.12H559.33V979.69H560.89V984.38H564.01V982.81H565.58V981.25H567.14V982.81H568.70V987.50H570.26V989.06H571.83V984.38H573.39V982.81H579.64V984.38H585.89V987.50H587.45V981.25H589.01V979.69H590.58V978.12H592.14V976.56H593.70V975.00H596.83V978.12H598.39V979.69H603.08V976.56H604.64V973.44H607.76V976.56H610.89V975.00H614.01V978.12H615.58V982.81H617.14V984.38H618.70V981.25H621.83V982.81H623.39V984.38H624.95V982.81H626.51V981.25H628.08V979.69H629.64V978.12H631.20V981.25H634.33V979.69H635.89V976.56H637.45V971.88H639.01V970.31H640.58V975.00H642.14V971.88H646.83V968.75H649.95V970.31H651.51V965.62H653.08V962.50H654.64V964.06H660.89V967.19H662.45V970.31H664.01V971.88H668.70V970.31H671.83V965.62H674.95V967.19H676.51V965.62H679.64V968.75H681.20V965.62H682.76V964.06H684.33V962.50H685.89V960.94H687.45V964.06H689.01V957.81H690.58V956.25H692.14V959.38H695.26V960.94H696.83V959.38H698.39V950.00H699.95V948.44H701.51V951.56H703.08V960.94H704.64V957.81H706.20V953.12H709.33V951.56H710.89V950.00H712.45V946.88H714.01V945.31H715.58V948.44H717.14V950.00H718.70V951.56H720.26V950.00H726.51V948.44H731.20V953.12H732.76V954.69H734.33V918.75H737.45V917.19H739.01V914.06H740.58V915.62H742.14V917.19H743.70V918.75H745.26V920.31H751.51V921.88H753.08V925.00H756.20V923.44H757.76V929.69H759.33V934.38H760.89V937.50H764.01V931.25H765.58V918.75H767.14V921.88H768.70V925.00H770.26V929.69H771.83V928.12H773.39V926.56H774.95V925.00H778.08V926.56H779.64V932.81H784.33V937.50H785.89V940.62H787.45V935.94H789.01V945.31H790.58V948.44H792.14V940.62H793.70V932.81H795.26V937.50H796.83V939.06H798.39V940.62H799.95V943.75H801.51V942.19H803.08V939.06H804.64V937.50H806.20V935.94H809.33V939.06H814.01V935.94H817.14V937.50H818.70V943.75H820.26V950.00H821.83V953.12H823.39V951.56H824.95V950.00H826.51V948.44H828.08V951.56H829.64V954.69H831.20V948.44H832.76V940.62H835.89V942.19H837.45V945.31H839.01V942.19H840.58V939.06H842.14V935.94H843.70V937.50H845.26V939.06H846.83V937.50H848.39V934.38H849.95V931.25H851.51V935.94H853.08V932.81H856.20V921.88H857.76V918.75H860.89V920.31H862.45V923.44H864.01V934.38H867.14V935.94H871.83V943.75H873.39V945.31H874.95V946.88H879.64V943.75H881.20V946.88H882.76V948.44H885.89V945.31H887.45V943.75H890.58V939.06H892.14V937.50H893.70V940.62H895.26V943.75H896.83V945.31H898.39V939.06H899.95V937.50H904.64V935.94H907.76V939.06H909.33V937.50H914.01V939.06H915.58V940.62H917.14V942.19H920.26V940.62H921.83V935.94H923.39V934.38H926.51V932.81H928.08V931.25H934.33V932.81H937.45V937.50H939.01V940.62H940.58V942.19H942.14V940.62H943.70V937.50H945.26V934.38H946.83V932.81H949.95V934.38H951.51V935.94H953.08V937.50H954.64V940.62H957.76V939.06H959.33V935.94H960.89V932.81H964.01V934.38H965.58V935.94H967.14V939.06H968.70V940.62H970.26V943.75H971.83V945.31H973.39V946.88H981.20V948.44H982.76V953.12H987.45V942.19H989.01V937.50H990.58V939.06H992.14V943.75H993.70V940.62H995.26V939.06H996.83V937.50H999.95V935.94H1001.51V932.81H1007.76V931.25H1010.89V928.12H1012.45V926.56H1015.58V928.12H1017.14V929.69H1023.39V932.81H1024.95V934.38H1028.08V931.25H1029.64V929.69H1035.89V934.38H1039.01V935.94H1043.70V937.50H1046.83V935.94H1048.39V934.38H1049.95V932.81H1051.51V931.25H1053.08V928.12H1054.64V926.56H1056.20V923.44H1059.33V929.69H1062.45V937.50H1064.01V943.75H1065.58V946.88H1068.70V942.19H1070.26V940.62H1071.83V939.06H1073.39V937.50H1074.95V935.94H1076.51V937.50H1078.08V940.62H1079.64V937.50H1081.20V932.81H1082.76V934.38H1084.33V939.06H1085.89V945.31H1087.45V948.44H1089.01V945.31H1090.58V943.75H1092.14V935.94H1093.70V931.25H1095.26V928.12H1098.39V931.25H1099.95V932.81H1104.64V929.69H1106.20V928.12H1107.76V926.56H1109.33V921.88H1110.89V915.62H1112.45V910.94H1114.01V907.81H1117.14V910.94H1118.70V912.50H1120.26V914.06H1124.95V912.50H1126.51V904.69H1128.08V903.12H1129.64V904.69H1134.33V906.25H1135.89V909.38H1137.45V910.94H1142.14V914.06H1143.70V910.94H1145.26V909.38H1148.39V910.94H1149.95V909.38H1151.51V903.12H1154.64V907.81H1156.20V910.94H1159.33V912.50H1160.89V915.62H1162.45V920.31H1164.01V918.75H1165.58V914.06H1167.14V915.62H1168.70V920.31H1170.26V918.75H1171.83V912.50H1173.39V910.94H1174.95V912.50H1176.51V914.06H1187.45V917.19H1190.58V920.31H1193.70V918.75H1195.26V915.62H1198.39V918.75H1199.95V921.88H1201.51V925.00H1203.08V926.56H1204.64V925.00H1207.76V910.94H1210.89V909.38H1212.45V906.25H1214.01V904.69H1215.58V903.12H1217.14V906.25H1218.70V910.94H1221.83V909.38H1223.39V907.81H1224.95V906.25H1226.51V904.69H1228.08V903.12H1229.64V906.25H1231.20V903.12H1232.76V898.44H1235.89V896.88H1237.45V895.31H1239.01V896.88H1243.70V898.44H1245.26V904.69H1246.83V909.38H1248.39V912.50H1249.95V915.62H1251.51V914.06H1253.08V910.94H1256.20V909.38H1259.33V914.06H1260.89V910.94H1262.45V907.81H1264.01V904.69H1265.58V898.44H1267.14V892.19H1268.70V889.06H1270.26V892.19H1271.83V893.75H1274.95V890.62H1276.51V887.50H1278.08V882.81H1279.64V884.38H1281.20V879.69H1282.76V873.44H1284.33V871.88H1285.89V873.44H1287.45V871.88H1289.01V873.44H1290.58V875.00H1292.14V878.12H1293.70V876.56H1295.26V873.44H1296.83V870.31H1298.39V868.75H1301.51V867.19H1303.08V865.62H1304.64V868.75H1307.76V873.44H1309.33V875.00H1310.89V873.44H1312.45V870.31H1314.01V865.62H1315.58V867.19H1317.14V868.75H1318.70V867.19H1320.26V864.06H1321.83V862.50H1324.95V859.38H1326.51V854.69H1328.08V856.25H1329.64V860.94H1331.20V867.19H1332.76V873.44H1334.33V878.12H1335.89V875.00H1337.45V873.44H1340.58V875.00H1343.70V865.62H1345.26V859.38H1346.83V860.94H1348.39V862.50H1349.95V860.94H1351.51V859.38H1353.08V857.81H1354.64V854.69H1356.20V850.00H1357.76V848.44H1359.33V850.00H1364.01V851.56H1367.14V850.00H1370.26V848.44H1371.83V845.31H1373.39V842.19H1374.95V835.94H1376.51V834.38H1378.08V832.81H1381.20V823.44H1382.76V821.88H1384.33V829.69H1385.89V832.81H1387.45V829.69H1389.01V826.56H1390.58V825.00H1395.26V828.12H1396.83V831.25H1398.39V826.56H1399.95V821.88H1401.51V815.62H1404.64V812.50H1406.20V809.38H1407.76V806.25H1409.33V796.88H1410.89V793.75H1412.45V790.62H1414.01V784.38H1415.58V778.12H1417.14V776.56H1418.70V778.12H1420.26V782.81H1421.83V785.94H1423.39V787.50H1426.51V784.38H1428.08V782.81H1429.64V779.69H1432.76V782.81H1434.33V785.94H1437.45V790.62H1439.01V793.75H1442.14V792.19H1443.70V796.88H1445.26V801.56H1451.51V803.12H1457.76V806.25H1459.33V809.38H1460.89V810.94H1462.45V812.50H1464.01V814.06H1465.58V815.62H1467.14V817.19H1468.70V812.50H1470.26V814.06H1471.83V818.75H1473.39V820.31H1474.95V821.88H1476.51V823.44H1478.08V821.88H1479.64V825.00H1481.20V840.62H1485.89V842.19H1487.45V839.06H1489.01V837.50H1492.14V839.06H1493.70V837.50H1495.26V832.81H1496.83V829.69H1501.51V832.81H1503.08V831.25H1504.64V828.12H1506.20V825.00H1507.76V823.44H1510.89V826.56H1512.45V831.25H1514.01V832.81H1515.58V829.69H1517.14V828.12H1518.70V825.00H1520.26V820.31H1521.83V817.19H1523.39V814.06H1526.51V806.25H1529.64V807.81H1531.20V806.25H1532.76V804.69H1534.33V807.81H1535.89V812.50H1537.45V818.75H1539.01V821.88H1542.14V818.75H1543.70V815.62H1545.26V817.19H1546.83V820.31H1548.39V821.88H1549.95V818.75H1551.51V814.06H1553.08V812.50H1556.20V807.81H1557.76V806.25H1559.33V807.81H1560.89V809.38H1565.58V810.94H1567.14V814.06H1568.70V818.75H1570.26V820.31H1573.39V821.88H1576.51V820.31H1578.08V815.62H1579.64V810.94H1581.20V804.69H1582.76V800.00H1584.33V801.56H1585.89V807.81H1587.45V809.38H1590.58V807.81H1595.26V809.38H1596.83V807.81H1601.51V809.38H1603.08V810.94H1604.64V812.50H1606.20V814.06H1609.33V817.19H1610.89V820.31H1617.14V821.88H1621.83V818.75H1623.39V812.50H1626.51V810.94H1628.08V814.06H1629.64V809.38H1631.20V806.25H1632.76V804.69H1634.33V807.81H1635.89V812.50H1639.01V815.62H1640.58V817.19H1643.70V818.75H1645.26V820.31H1646.83V823.44H1648.39V825.00H1649.95V828.12H1651.51V825.00H1653.08V821.88H1654.64V825.00H1656.20V826.56H1657.76V823.44H1659.33V815.62H1660.89V814.06H1667.14V821.88H1668.70V817.19H1671.83V815.62H1673.39V812.50H1674.95V810.94H1678.08V814.06H1679.64V815.62H1681.20V818.75H1684.33V815.62H1685.89V814.06H1687.45V812.50H1696.83V817.19H1698.39V818.75H1701.51V815.62H1703.08V814.06H1704.64V812.50H1707.76V815.62H1709.33V817.19H1710.89V814.06H1714.01V815.62H1717.14V810.94H1718.70V809.38H1726.51V810.94H1729.64V809.38H1732.76V807.81H1735.89V812.50H1737.45V815.62H1739.01V812.50H1740.58V810.94H1743.70V812.50H1745.26V814.06H1746.83V815.62H1748.39V817.19H1749.95V815.62H1751.51V814.06H1754.64V815.62H1756.20V817.19H1759.33V818.75H1760.89V821.88H1762.45V823.44H1764.01V825.00H1765.58V820.31H1776.51V823.44H1779.64V821.88H1781.20V818.75H1782.76V815.62H1784.33V814.06H1785.89V812.50H1787.45V814.06H1789.01V815.62H1792.14V818.75H1793.70V820.31H1795.26V823.44H1796.83V825.00H1803.08V823.44H1806.20V825.00H1807.76V826.56H1809.33V825.00H1810.89V821.88H1812.45V823.44H1823.39V820.31H1824.95V818.75H1826.51V820.31H1829.64V821.88H1831.20V823.44H1832.76V825.00H1834.33V826.56H1839.01V825.00H1840.58V826.56H1842.14V828.12H1843.70V829.69H1845.26V828.12H1846.83V826.56H1848.39V825.00H1849.95V821.88H1851.51V820.31H1854.64V821.88H1856.20V825.00H1857.76V826.56H1862.45V825.00H1864.01V823.44H1865.58V820.31H1867.14V818.75H1868.70V820.31H1874.95V823.44H1876.51V825.00H1878.08V826.56H1882.76V823.44H1884.33V821.88H1887.45V820.31H1889.01V821.88H1890.58V823.44H1892.14V825.00H1895.26V820.31H1896.83V821.88H1898.39V840.62H1899.42" fill="none" stroke="#ff0000" stroke-width="3.2" stroke-linejoin="miter" stroke-linecap="butt"/>
</svg>
<div class="ct" style="left:12.0px;top:78.35px;"><span class="j">時刻</span>:<span class="d">06</span>:<span class="d">00</span> <span class="j">始値</span>:<span class="d">13000</span> <span class="j">高値</span>:<span class="d">13000</span> <span class="j">安値</span>:<span class="d">13000</span> <span class="j">終値</span>:<span class="d">13000</span></div>
<div class="ct" style="left:12.0px;top:407.45px;"><span class="j">時刻</span>:<span class="d">06</span>:<span class="d">00</span> <span class="j">始値</span>:<span class="d">4610</span> <span class="j">高値</span>:<span class="d">4610</span> <span class="j">安値</span>:<span class="d">4610</span> <span class="j">終値</span>:<span class="d">4610</span></div>
<div class="ct" style="left:12.0px;top:763.35px;">[<span class="j">金</span> <span class="d">25</span>/<span class="d">10</span> <span class="d">13</span>,<span class="d">000</span><span class="j jx">×</span><span class="d">1</span>.<span class="d">00</span>]<span class="j">－</span>[<span class="j">白金</span> <span class="d">25</span>/<span class="d">10</span> <span class="d">4</span>,<span class="d">610</span><span class="j jx">×</span><span class="d">1</span>.<span class="d">00</span>] <span class="j">終値</span> <span class="j">時刻</span>:<span class="d">06</span>:<span class="d">00</span> <span class="d">8</span>,<span class="d">390</span></div>
<div class="yax" style="left:1906.4px;top:74.39999999999999px;width:92.79999999999995px;height:321.7px">
<div class="ct" style="left:1.8999999999998636px;top:54.85000000000001px"><span class="d">13</span>,<span class="d">000</span></div>
<div class="ct" style="left:1.8999999999998636px;top:129.55px"><span class="d">12</span>,<span class="d">900</span></div>
<div class="ct" style="left:1.8999999999998636px;top:203.25px"><span class="d">12</span>,<span class="d">800</span></div>
<div class="ct" style="left:1.8999999999998636px;top:276.95000000000005px"><span class="d">12</span>,<span class="d">700</span></div>
</div>
<div class="yax" style="left:1906.4px;top:403.5px;width:92.79999999999995px;height:349.0px">
<div class="ct" style="left:1.8999999999998636px;top:8.350000000000023px"><span class="d">4</span>,<span class="d">650</span></div>
<div class="ct" style="left:1.8999999999998636px;top:91.35000000000002px"><span class="d">4</span>,<span class="d">600</span></div>
<div class="ct" style="left:1.8999999999998636px;top:175.85000000000002px"><span class="d">4</span>,<span class="d">550</span></div>
<div class="ct" style="left:1.8999999999998636px;top:260.25px"><span class="d">4</span>,<span class="d">500</span></div>
<div class="ct" style="left:1.8999999999998636px;top:344.65px"><span class="d">4</span>,<span class="d">450</span></div>
</div>
<div class="yax" style="left:1906.4px;top:759.4px;width:92.79999999999995px;height:314.8px">
<div class="ct" style="left:1.8999999999998636px;top:-12.75px"><span class="d">8</span>,<span class="d">450</span></div>
<div class="ct" style="left:1.8999999999998636px;top:51.14999999999998px"><span class="d">8</span>,<span class="d">400</span></div>
<div class="ct" style="left:1.8999999999998636px;top:114.14999999999998px"><span class="d">8</span>,<span class="d">350</span></div>
<div class="ct" style="left:1.8999999999998636px;top:178.14999999999998px"><span class="d">8</span>,<span class="d">300</span></div>
<div class="ct" style="left:1.8999999999998636px;top:240.64999999999998px"><span class="d">8</span>,<span class="d">250</span></div>
<div class="ct" style="left:1.8999999999998636px;top:303.15px"><span class="d">8</span>,<span class="d">200</span></div>
</div>
<div class="ct" style="left:35.5px;top:369.42px;letter-spacing:1.1px;text-shadow:0.7px 0 0 #cdcdcd;"><span class="d">0506</span></div>
<div class="ct" style="left:105.0px;top:369.42px;"><span class="d">09</span></div>
<div class="ct" style="left:198.79999999999998px;top:369.42px;"><span class="d">10</span></div>
<div class="ct" style="left:293.9px;top:369.42px;"><span class="d">11</span></div>
<div class="ct" style="left:387.59999999999997px;top:369.42px;"><span class="d">12</span></div>
<div class="ct" style="left:480.2px;top:369.42px;"><span class="d">13</span></div>
<div class="ct" style="left:575.2px;top:369.42px;"><span class="d">14</span></div>
<div class="ct" style="left:669.0px;top:369.42px;"><span class="d">15</span></div>
<div class="ct" style="left:734.2px;top:369.42px;"><span class="d">17</span></div>
<div class="ct" style="left:828.4000000000001px;top:369.42px;"><span class="d">18</span></div>
<div class="ct" style="left:923.4000000000001px;top:369.42px;"><span class="d">19</span></div>
<div class="ct" style="left:1016.9000000000001px;top:369.42px;"><span class="d">20</span></div>
<div class="ct" style="left:1112.5px;top:369.42px;"><span class="d">21</span></div>
<div class="ct" style="left:1207.6000000000001px;top:369.42px;"><span class="d">22</span></div>
<div class="ct" style="left:1301.7px;top:369.42px;"><span class="d">23</span></div>
<div class="ct" style="left:1396.7px;top:369.42px;"><span class="d">00</span></div>
<div class="ct" style="left:1490.5px;top:369.42px;"><span class="d">01</span></div>
<div class="ct" style="left:1582.8px;top:369.42px;"><span class="d">02</span></div>
<div class="ct" style="left:1667.2px;top:369.42px;"><span class="d">03</span></div>
<div class="ct" style="left:1745.2px;top:369.42px;"><span class="d">04</span></div>
<div class="ct" style="left:1828.1000000000001px;top:369.42px;"><span class="d">05</span></div>
<div class="ct" style="left:1873.2px;top:369.42px;"><span class="d">06</span></div>
<div class="ct" style="left:80.0px;top:346.35px;"><span class="d">09</span></div>
<div class="ct" style="left:1397.6px;top:346.35px;"><span class="d">10</span></div>
<div class="ct" style="left:35.5px;top:725.82px;letter-spacing:1.1px;text-shadow:0.7px 0 0 #cdcdcd;"><span class="d">0506</span></div>
<div class="ct" style="left:105.0px;top:725.82px;"><span class="d">09</span></div>
<div class="ct" style="left:198.79999999999998px;top:725.82px;"><span class="d">10</span></div>
<div class="ct" style="left:293.9px;top:725.82px;"><span class="d">11</span></div>
<div class="ct" style="left:387.59999999999997px;top:725.82px;"><span class="d">12</span></div>
<div class="ct" style="left:480.2px;top:725.82px;"><span class="d">13</span></div>
<div class="ct" style="left:575.2px;top:725.82px;"><span class="d">14</span></div>
<div class="ct" style="left:669.0px;top:725.82px;"><span class="d">15</span></div>
<div class="ct" style="left:734.2px;top:725.82px;"><span class="d">17</span></div>
<div class="ct" style="left:828.4000000000001px;top:725.82px;"><span class="d">18</span></div>
<div class="ct" style="left:923.4000000000001px;top:725.82px;"><span class="d">19</span></div>
<div class="ct" style="left:1016.9000000000001px;top:725.82px;"><span class="d">20</span></div>
<div class="ct" style="left:1112.5px;top:725.82px;"><span class="d">21</span></div>
<div class="ct" style="left:1207.6000000000001px;top:725.82px;"><span class="d">22</span></div>
<div class="ct" style="left:1301.7px;top:725.82px;"><span class="d">23</span></div>
<div class="ct" style="left:1396.7px;top:725.82px;"><span class="d">00</span></div>
<div class="ct" style="left:1490.5px;top:725.82px;"><span class="d">01</span></div>
<div class="ct" style="left:1582.8px;top:725.82px;"><span class="d">02</span></div>
<div class="ct" style="left:1667.2px;top:725.82px;"><span class="d">03</span></div>
<div class="ct" style="left:1745.2px;top:725.82px;"><span class="d">04</span></div>
<div class="ct" style="left:1828.1000000000001px;top:725.82px;"><span class="d">05</span></div>
<div class="ct" style="left:1873.2px;top:725.82px;"><span class="d">06</span></div>
<div class="ct" style="left:80.0px;top:702.75px;"><span class="d">09</span></div>
<div class="ct" style="left:1397.6px;top:702.75px;"><span class="d">10</span></div>
<div class="ct" style="left:35.5px;top:1047.9199999999998px;letter-spacing:1.1px;text-shadow:0.7px 0 0 #cdcdcd;"><span class="d">0506</span></div>
<div class="ct" style="left:105.0px;top:1047.9199999999998px;"><span class="d">09</span></div>
<div class="ct" style="left:198.79999999999998px;top:1047.9199999999998px;"><span class="d">10</span></div>
<div class="ct" style="left:293.9px;top:1047.9199999999998px;"><span class="d">11</span></div>
<div class="ct" style="left:387.59999999999997px;top:1047.9199999999998px;"><span class="d">12</span></div>
<div class="ct" style="left:480.2px;top:1047.9199999999998px;"><span class="d">13</span></div>
<div class="ct" style="left:575.2px;top:1047.9199999999998px;"><span class="d">14</span></div>
<div class="ct" style="left:669.0px;top:1047.9199999999998px;"><span class="d">15</span></div>
<div class="ct" style="left:734.2px;top:1047.9199999999998px;"><span class="d">17</span></div>
<div class="ct" style="left:828.4000000000001px;top:1047.9199999999998px;"><span class="d">18</span></div>
<div class="ct" style="left:923.4000000000001px;top:1047.9199999999998px;"><span class="d">19</span></div>
<div class="ct" style="left:1016.9000000000001px;top:1047.9199999999998px;"><span class="d">20</span></div>
<div class="ct" style="left:1112.5px;top:1047.9199999999998px;"><span class="d">21</span></div>
<div class="ct" style="left:1207.6000000000001px;top:1047.9199999999998px;"><span class="d">22</span></div>
<div class="ct" style="left:1301.7px;top:1047.9199999999998px;"><span class="d">23</span></div>
<div class="ct" style="left:1396.7px;top:1047.9199999999998px;"><span class="d">00</span></div>
<div class="ct" style="left:1490.5px;top:1047.9199999999998px;"><span class="d">01</span></div>
<div class="ct" style="left:1582.8px;top:1047.9199999999998px;"><span class="d">02</span></div>
<div class="ct" style="left:1667.2px;top:1047.9199999999998px;"><span class="d">03</span></div>
<div class="ct" style="left:1745.2px;top:1047.9199999999998px;"><span class="d">04</span></div>
<div class="ct" style="left:1828.1000000000001px;top:1047.9199999999998px;"><span class="d">05</span></div>
<div class="ct" style="left:1873.2px;top:1047.9199999999998px;"><span class="d">06</span></div>
<div class="ct" style="left:80.0px;top:1024.85px;"><span class="d">09</span></div>
<div class="ct" style="left:1397.6px;top:1024.85px;"><span class="d">10</span></div>
<div class="bl" style="left:9.200000000000001px;top:370.8px;width:1898.0000000000002px"></div>
<div class="bl" style="left:9.200000000000001px;top:727.2px;width:1898.0000000000002px"></div>
<div class="bl" style="left:9.200000000000001px;top:1049.3px;width:1898.0000000000002px"></div>
<div class="pbox" style="left:1905.9px;top:134.7px;width:93.49999999999996px;height:33.60000000000002px"><span class="ct"><span class="d">13</span>,<span class="d">000</span></span></div>
<div class="pbox" style="left:1905.9px;top:483.3px;width:93.49999999999996px;height:33.69999999999999px"><span class="ct"><span class="d">4</span>,<span class="d">610</span></span></div>
<div class="pbox" style="left:1905.9px;top:827.3px;width:93.49999999999996px;height:33.90000000000009px"><span class="ct"><span class="d">8</span>,<span class="d">390</span></span></div>
<div id="frame-top"></div>
<div id="frame-l"></div>
<div id="frame-l2"></div>
<div id="frame-r"></div>
<div id="frame-rr"></div>
<div id="frame-b"></div>

</div>
</body></html>
